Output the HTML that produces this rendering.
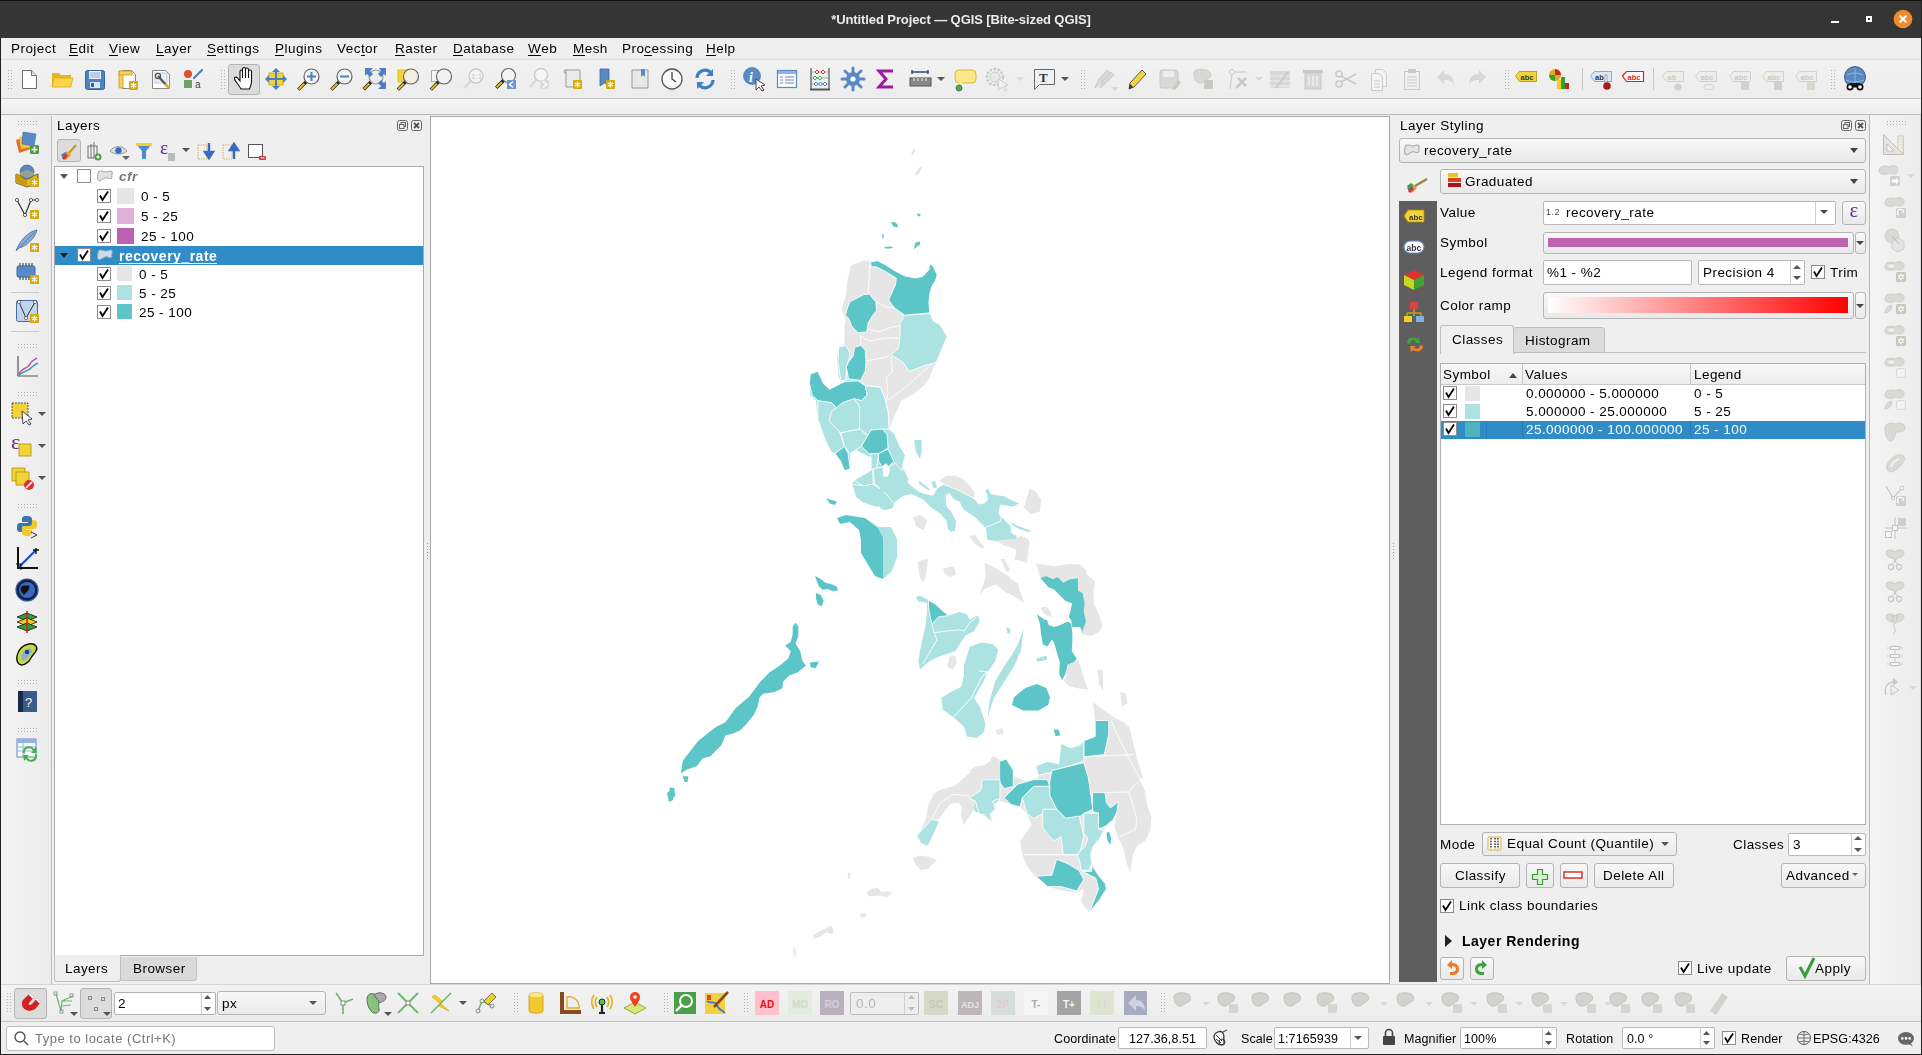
<!DOCTYPE html><html><head><meta charset="utf-8"><style>
*{box-sizing:border-box;margin:0;padding:0}
html,body{width:1922px;height:1055px;overflow:hidden;background:#efefef;font-family:"Liberation Sans",sans-serif;font-size:13px;color:#000}
.a{position:absolute}
.t{position:absolute;white-space:nowrap;line-height:16px;font-size:13.5px;letter-spacing:0.45px;margin-top:1px;will-change:transform}
svg{position:absolute;overflow:visible}
u{text-decoration:none;border-bottom:1px solid #000;line-height:13px;display:inline-block}
</style></head><body><div class="a" style="left:0px;top:0px;width:1922px;height:38px;background:#353535"></div>
<div class="t" style="left:0px;top:11px;width:1922px;text-align:center;color:#ececec;font-weight:bold;font-size:13px;letter-spacing:-0.1px;line-height:16px">*Untitled Project — QGIS [Bite-sized QGIS]</div>
<svg style="left:0px;top:0px" width="1922" height="38" viewBox="0 0 1922 38"><rect x="1831" y="21" width="8" height="2" fill="#fff"/><rect x="1866" y="16" width="6" height="6" fill="#fff"/><rect x="1868" y="18" width="2" height="2" fill="#333"/><circle cx="1903" cy="19" r="9.3" fill="#f08a2c"/><path d="M1899.5 15.5 L1906.5 22.5 M1906.5 15.5 L1899.5 22.5" stroke="#fff" stroke-width="2"/></svg>
<div class="a" style="left:0px;top:38px;width:1px;height:1017px;background:#222"></div>
<div class="a" style="left:1px;top:38px;width:1921px;height:21px;background:#efefef"></div>
<div class="t" style="left:11px;top:40px;">Project</div>
<div class="t" style="left:69px;top:40px;"><u>E</u>dit</div>
<div class="t" style="left:109px;top:40px;"><u>V</u>iew</div>
<div class="t" style="left:156px;top:40px;"><u>L</u>ayer</div>
<div class="t" style="left:207px;top:40px;"><u>S</u>ettings</div>
<div class="t" style="left:275px;top:40px;"><u>P</u>lugins</div>
<div class="t" style="left:337px;top:40px;">Vec<u>t</u>or</div>
<div class="t" style="left:395px;top:40px;"><u>R</u>aster</div>
<div class="t" style="left:453px;top:40px;"><u>D</u>atabase</div>
<div class="t" style="left:528px;top:40px;"><u>W</u>eb</div>
<div class="t" style="left:573px;top:40px;"><u>M</u>esh</div>
<div class="t" style="left:622px;top:40px;">Pro<u>c</u>essing</div>
<div class="t" style="left:706px;top:40px;"><u>H</u>elp</div>
<div class="a" style="left:1px;top:59px;width:1921px;height:40px;background:linear-gradient(#f2f2f2,#ececec);border-top:1px solid #dedede;border-bottom:1px solid #c4c4c4"></div>
<div class="a" style="left:1px;top:99px;width:1921px;height:16px;background:linear-gradient(#f4f4f4,#efefef);border-bottom:1px solid #b9b9b9"></div>
<svg style="left:0px;top:59px" width="1922" height="40" viewBox="0 59 1922 40"><rect x="8" y="70" width="1" height="1" fill="#b0b0b0"/><rect x="11" y="70" width="1" height="1" fill="#b0b0b0"/><rect x="8" y="73" width="1" height="1" fill="#b0b0b0"/><rect x="11" y="73" width="1" height="1" fill="#b0b0b0"/><rect x="8" y="76" width="1" height="1" fill="#b0b0b0"/><rect x="11" y="76" width="1" height="1" fill="#b0b0b0"/><rect x="8" y="79" width="1" height="1" fill="#b0b0b0"/><rect x="11" y="79" width="1" height="1" fill="#b0b0b0"/><rect x="8" y="82" width="1" height="1" fill="#b0b0b0"/><rect x="11" y="82" width="1" height="1" fill="#b0b0b0"/><rect x="8" y="85" width="1" height="1" fill="#b0b0b0"/><rect x="11" y="85" width="1" height="1" fill="#b0b0b0"/><rect x="8" y="88" width="1" height="1" fill="#b0b0b0"/><rect x="11" y="88" width="1" height="1" fill="#b0b0b0"/><g transform="translate(17,67)"><path d="M5.5 3.5 h9 l5 5 v13 h-14 Z" fill="#fff" stroke="#6f6f6f"/><path d="M14.5 3.5 v5 h5" fill="#e6e6e6" stroke="#6f6f6f"/></g><g transform="translate(50,67)"><path d="M2 6 h7 l2 2 h10 v12 h-19 Z" fill="#e8b820"/><path d="M4 11 h19 l-2.5 9 h-18.5 Z" fill="#fdd44a" stroke="#d8a818" stroke-width="0.8"/></g><g transform="translate(83,67)"><rect x="2.5" y="3.5" width="19" height="19" rx="2" fill="#4f82c0" stroke="#33649f"/><rect x="6" y="4" width="12" height="8" fill="#e8eef8"/><path d="M7 6h10M7 8h10M7 10h10" stroke="#7a9ac8" stroke-width="0.8"/><rect x="7" y="15" width="10" height="6" fill="#dfe8f4"/><rect x="8" y="16" width="3" height="4" fill="#33649f"/></g><g transform="translate(116,67)"><path d="M6.5 3.5 h9 l4 4 v14 h-13 Z" fill="#fff" stroke="#888"/><path d="M3 4 h4 v17 h-4 Z" fill="#f2d060" stroke="#c89a10" stroke-width="0.8"/><path d="M3 4 h13 v4 h-13 Z" fill="#f2d060" stroke="#c89a10" stroke-width="0.8"/><g transform="translate(13,14)"><rect x="0" y="0" width="9" height="9" rx="1" fill="#d4a910"/><path d="M4.5 1.5v6M1.8 3l5.4 3M1.8 6l5.4-3" stroke="#fff" stroke-width="1.2"/></g></g><g transform="translate(149,67)"><path d="M3.5 3.5 h13 l4 4 v14 h-17 Z" fill="#fff" stroke="#888"/><rect x="6" y="6" width="12" height="10" fill="#e6eefa" stroke="#98b0d0" stroke-width="0.6"/><path d="M9 9 L18 19" stroke="#555" stroke-width="2.2"/><path d="M16 17 L20 21" stroke="#d8b020" stroke-width="2.4"/><circle cx="9" cy="9" r="2.6" fill="none" stroke="#555" stroke-width="1.2"/></g><g transform="translate(182,67)"><circle cx="6" cy="7" r="4" fill="#d9542b"/><path d="M12 11 L20 3" stroke="#4a7fc0" stroke-width="2.2" stroke-linecap="round"/><rect x="2" y="13" width="8" height="8" fill="#6aa36a"/><text x="13" y="21" font-size="10" font-family="Liberation Sans" fill="#444">a</text></g><rect x="221" y="70" width="1" height="1" fill="#b0b0b0"/><rect x="224" y="70" width="1" height="1" fill="#b0b0b0"/><rect x="221" y="73" width="1" height="1" fill="#b0b0b0"/><rect x="224" y="73" width="1" height="1" fill="#b0b0b0"/><rect x="221" y="76" width="1" height="1" fill="#b0b0b0"/><rect x="224" y="76" width="1" height="1" fill="#b0b0b0"/><rect x="221" y="79" width="1" height="1" fill="#b0b0b0"/><rect x="224" y="79" width="1" height="1" fill="#b0b0b0"/><rect x="221" y="82" width="1" height="1" fill="#b0b0b0"/><rect x="224" y="82" width="1" height="1" fill="#b0b0b0"/><rect x="221" y="85" width="1" height="1" fill="#b0b0b0"/><rect x="224" y="85" width="1" height="1" fill="#b0b0b0"/><rect x="221" y="88" width="1" height="1" fill="#b0b0b0"/><rect x="224" y="88" width="1" height="1" fill="#b0b0b0"/><rect x="228.5" y="64.5" width="31" height="30" rx="2.5" fill="#dcdcdc" stroke="#b4b4b4"/><g transform="translate(233,66)"><path d="M8 23 C6 19 2 15 1.5 13 C1 11 3 10.5 4.5 12 L7 15 V5.5 C7 3.5 9.5 3.5 9.5 5.5 V12 V3 C9.5 1 12.5 1 12.5 3 V12 V3.5 C12.5 1.5 15.5 1.5 15.5 3.5 V12 V5.5 C15.5 3.5 18.5 3.5 18.5 5.5 V16 C18.5 19 17 21 16.5 23 Z" fill="#fff" stroke="#111" stroke-width="1.1"/></g><g transform="translate(264,67)"><rect x="5" y="6" width="14" height="12" fill="#f2d43a" stroke="#c9a400" stroke-width="0.8"/><path d="M12 1 L16 5 H8 Z M12 23 L8 19 H16 Z M1 12 L5 8 V16 Z M23 12 L19 16 V8 Z" fill="#4a7fc0"/><path d="M12 4V20M4 12H20" stroke="#4a7fc0" stroke-width="2"/></g><g transform="translate(297,67)"><path d="M9.100000000000001 14.899999999999999 L1.375 22.625" stroke="#222" stroke-width="3.4" stroke-linecap="butt"/><path d="M7.375 16.625 L1.75 22.25" stroke="#e8c020" stroke-width="2" stroke-linecap="butt"/><circle cx="14.5" cy="9.5" r="7.5" fill="#f6f6f6" stroke="#666" stroke-width="1.2"/><path d="M14.5 5v9M10 9.5h9" stroke="#4a7fc0" stroke-width="2"/></g><g transform="translate(330,67)"><path d="M9.100000000000001 14.899999999999999 L1.375 22.625" stroke="#222" stroke-width="3.4" stroke-linecap="butt"/><path d="M7.375 16.625 L1.75 22.25" stroke="#e8c020" stroke-width="2" stroke-linecap="butt"/><circle cx="14.5" cy="9.5" r="7.5" fill="#f6f6f6" stroke="#666" stroke-width="1.2"/><path d="M10 9.5h9" stroke="#4a7fc0" stroke-width="2"/></g><g transform="translate(363,67)"><path d="M7.96 15.04 L0.75 22.25" stroke="#222" stroke-width="3.4" stroke-linecap="butt"/><path d="M6.3500000000000005 16.65 L1.0999999999999996 21.9" stroke="#e8c020" stroke-width="2" stroke-linecap="butt"/><circle cx="13" cy="10" r="7" fill="#ececec" stroke="#999" stroke-width="1.2"/><path d="M2 1 h8 l-3 3 3 3 -3 3 -3 -3 -2 2 Z M23 1 v8 l-2 -2 -3 3 -3 -3 3 -3 -2 -3 Z M23 22 h-8 l3 -3 -3 -3 3 -3 3 3 2 -2 Z" fill="#4a7fc0"/></g><g transform="translate(396,67)"><rect x="2" y="3" width="11" height="12" fill="#f2d43a" stroke="#c9a400" stroke-width="0.6"/><path d="M9.600000000000001 14.899999999999999 L1.875 22.625" stroke="#222" stroke-width="3.4" stroke-linecap="butt"/><path d="M7.875 16.625 L2.25 22.25" stroke="#e8c020" stroke-width="2" stroke-linecap="butt"/><circle cx="15" cy="9.5" r="7.5" fill="#f0eee0" stroke="#666" stroke-width="1.2"/></g><g transform="translate(429,67)"><rect x="2.5" y="3.5" width="10" height="11" fill="#f4f4f4" stroke="#aaa"/><path d="M9.600000000000001 14.899999999999999 L1.875 22.625" stroke="#222" stroke-width="3.4" stroke-linecap="butt"/><path d="M7.875 16.625 L2.25 22.25" stroke="#e8c020" stroke-width="2" stroke-linecap="butt"/><circle cx="15" cy="9.5" r="7.5" fill="#f2f2f2" stroke="#666" stroke-width="1.2"/></g><g transform="translate(462,67)"><path d="M9 14 L2 21" stroke="#d8d8d4" stroke-width="2.4"/><circle cx="14" cy="9" r="7" fill="#f3f3f3" stroke="#c9c9c6" stroke-width="1.3"/><text x="9" y="12" font-size="8" fill="#c9c9c6" font-family="Liberation Sans">1:1</text></g><g transform="translate(495,67)"><path d="M8.46 13.54 L1.25 20.75" stroke="#222" stroke-width="3.4" stroke-linecap="butt"/><path d="M6.8500000000000005 15.149999999999999 L1.5999999999999996 20.4" stroke="#e8c020" stroke-width="2" stroke-linecap="butt"/><circle cx="13.5" cy="8.5" r="7" fill="#f4f4f4" stroke="#666" stroke-width="1.2"/><rect x="12" y="13" width="9" height="9" fill="#6b98d0"/><path d="M18 14.5 L14.5 17.5 L18 20.5" stroke="#fff" stroke-width="1.4" fill="none"/></g><g transform="translate(528,67)"><path d="M8 13 L2 20" stroke="#d8d8d4" stroke-width="2.4"/><circle cx="13" cy="8" r="6.5" fill="#f5f5f5" stroke="#c9c9c6" stroke-width="1.3"/><rect x="12" y="13" width="9" height="9" fill="#dcdcdc"/><path d="M15 14.5 L18.5 17.5 L15 20.5" stroke="#fff" stroke-width="1.4" fill="none"/></g><g transform="translate(562,67)"><path d="M4 3 h14 v17 h-14 Z" fill="#eaeae6" stroke="#999"/><path d="M4 3 C1 3 1 6 4 6" fill="none" stroke="#999"/><g transform="translate(11,13)"><rect x="0" y="0" width="9" height="9" rx="1" fill="#d4a910"/><path d="M4.5 1.5v6M1.8 3l5.4 3M1.8 6l5.4-3" stroke="#fff" stroke-width="1.2"/></g></g><g transform="translate(595,67)"><path d="M5 2 h9 v17 l-4.5 -3 -4.5 3 Z" fill="#5a8ac6" stroke="#3a6aa6" stroke-width="0.8"/><g transform="translate(11,13)"><rect x="0" y="0" width="9" height="9" rx="1" fill="#d4a910"/><path d="M4.5 1.5v6M1.8 3l5.4 3M1.8 6l5.4-3" stroke="#fff" stroke-width="1.2"/></g></g><g transform="translate(628,67)"><path d="M4 3 h16 v18 h-16 Z" fill="#e8e8e4" stroke="#999"/><path d="M13 2 h4 v8 l-2 -2 -2 2 Z" fill="#5a8ac6"/></g><g transform="translate(660,67)"><circle cx="12" cy="12" r="10" fill="#fafafa" stroke="#555" stroke-width="1.3"/><path d="M12 5 V12 L16 15" stroke="#444" stroke-width="1.3" fill="none"/></g><g transform="translate(693,67)"><path d="M4 11 A8 8 0 0 1 18 6" stroke="#3d7ec8" stroke-width="3.2" fill="none"/><path d="M20 2 V9 H13 Z" fill="#3d7ec8"/><path d="M20 13 A8 8 0 0 1 6 18" stroke="#3d7ec8" stroke-width="3.2" fill="none"/><path d="M4 22 V15 H11 Z" fill="#3d7ec8"/></g><rect x="731" y="70" width="1" height="1" fill="#b0b0b0"/><rect x="734" y="70" width="1" height="1" fill="#b0b0b0"/><rect x="731" y="73" width="1" height="1" fill="#b0b0b0"/><rect x="734" y="73" width="1" height="1" fill="#b0b0b0"/><rect x="731" y="76" width="1" height="1" fill="#b0b0b0"/><rect x="734" y="76" width="1" height="1" fill="#b0b0b0"/><rect x="731" y="79" width="1" height="1" fill="#b0b0b0"/><rect x="734" y="79" width="1" height="1" fill="#b0b0b0"/><rect x="731" y="82" width="1" height="1" fill="#b0b0b0"/><rect x="734" y="82" width="1" height="1" fill="#b0b0b0"/><rect x="731" y="85" width="1" height="1" fill="#b0b0b0"/><rect x="734" y="85" width="1" height="1" fill="#b0b0b0"/><rect x="731" y="88" width="1" height="1" fill="#b0b0b0"/><rect x="734" y="88" width="1" height="1" fill="#b0b0b0"/><g transform="translate(742,67)"><circle cx="10" cy="9" r="8.5" fill="#5a8ac6" stroke="#3a6aa6" stroke-width="0.6"/><text x="7" y="15" font-size="14" font-style="italic" font-weight="bold" fill="#fff" font-family="Liberation Serif">i</text><path d="M14 12 L14 23 L17 20 L20 24 L22 23 L19 19 L23 18 Z" fill="#fff" stroke="#333" stroke-width="0.9"/></g><g transform="translate(775,67)"><rect x="2.5" y="3.5" width="19" height="17" fill="#fff" stroke="#5a8ac6" stroke-width="1.2"/><rect x="3" y="4" width="18" height="3" fill="#8fb2de"/><path d="M5 10h3M10 10h9M5 13h3M10 13h9M5 16h3M10 16h9" stroke="#5a8ac6" stroke-width="1.2"/></g><g transform="translate(808,67)"><path d="M3 1 V22 M21 1 V22" stroke="#555" stroke-width="1.2"/><path d="M2 22.5 H22" stroke="#555" stroke-width="2"/><path d="M3 5h18M3 11h18M3 17h18" stroke="#888" stroke-width="0.7"/><path d="M9 3l2 2-2 2-2-2z M15 3l2 2-2 2-2-2z" fill="#fff" stroke="#e03030" stroke-width="1"/><path d="M7 9l2 2-2 2-2-2z M12 9l2 2-2 2-2-2z" fill="#fff" stroke="#40b040" stroke-width="1"/><path d="M8 15l2 2-2 2-2-2z M12.5 15l2 2-2 2-2-2z M17 15l2 2-2 2-2-2z" fill="#fff" stroke="#4080d0" stroke-width="1"/></g><g transform="translate(841,67)"><path d="M12 1v22M1 12h22M4 4l16 16M20 4L4 20" stroke="#5a8ac6" stroke-width="3" stroke-linecap="round"/><circle cx="12" cy="12" r="7" fill="#5a8ac6"/><circle cx="12" cy="12" r="2.6" fill="#fff"/></g><g transform="translate(874,67)"><path d="M19 4 H5 L12 12 L5 20 H19" fill="none" stroke="#9a1aa0" stroke-width="3"/></g><g transform="translate(908,67)"><path d="M4 5 H20 M4 3 V7 M20 3 V7" stroke="#2a4a7a" stroke-width="1.5"/><rect x="2" y="11" width="21" height="8" fill="#888" stroke="#555"/><path d="M6 11v3M10 11v3M14 11v3M18 11v3" stroke="#eee" stroke-width="1"/></g><path d="M937 77 L945 77 L941 81 Z" fill="#555"/><g transform="translate(953,67)"><rect x="2" y="3" width="21" height="13" rx="4" fill="#fbe88a" stroke="#d8b830" stroke-width="1"/><path d="M6 15 L5 20 L10 15" fill="#fbe88a"/><circle cx="6" cy="21" r="3" fill="#5aa05a" stroke="#3a703a" stroke-width="0.8"/></g><g transform="translate(985,67)"><circle cx="10" cy="10" r="8" fill="none" stroke="#c9c9c6" stroke-width="2.4" stroke-dasharray="2.5 1.5"/><circle cx="10" cy="10" r="5" fill="#e9e9e9" stroke="#c9c9c6"/><path d="M13 12 L14 23 L17 20 L20 24 L22 23 L19 19 L23 18 Z" fill="#f2f2f2" stroke="#c9c9c6" stroke-width="0.9"/></g><path d="M1016 77 L1024 77 L1020 81 Z" fill="#d8d8d4"/><g transform="translate(1032,67)"><path d="M2.5 2.5 h20 v15 h-15 l-5 5 v-5 Z" fill="#eef2f6" stroke="#666" stroke-width="1"/><text x="7" y="15" font-size="13" font-weight="bold" fill="#333" font-family="Liberation Serif">T</text></g><path d="M1061 77 L1069 77 L1065 81 Z" fill="#555"/><rect x="1081" y="70" width="1" height="1" fill="#b0b0b0"/><rect x="1084" y="70" width="1" height="1" fill="#b0b0b0"/><rect x="1081" y="73" width="1" height="1" fill="#b0b0b0"/><rect x="1084" y="73" width="1" height="1" fill="#b0b0b0"/><rect x="1081" y="76" width="1" height="1" fill="#b0b0b0"/><rect x="1084" y="76" width="1" height="1" fill="#b0b0b0"/><rect x="1081" y="79" width="1" height="1" fill="#b0b0b0"/><rect x="1084" y="79" width="1" height="1" fill="#b0b0b0"/><rect x="1081" y="82" width="1" height="1" fill="#b0b0b0"/><rect x="1084" y="82" width="1" height="1" fill="#b0b0b0"/><rect x="1081" y="85" width="1" height="1" fill="#b0b0b0"/><rect x="1084" y="85" width="1" height="1" fill="#b0b0b0"/><rect x="1081" y="88" width="1" height="1" fill="#b0b0b0"/><rect x="1084" y="88" width="1" height="1" fill="#b0b0b0"/><g transform="translate(1092,67)"><path d="M3 21 L6 13 L15 3 L19 6 L9 16 Z" fill="#d8d8d4" stroke="#c9c9c6" stroke-width="0.8"/><path d="M8 21 L11 14 L19 5 L22 8 L13 17 Z" fill="#d8d8d4" stroke="#c9c9c6" stroke-width="0.8"/></g><path d="M1111 87 L1119 87 L1115 91 Z" fill="#d8d8d4"/><g transform="translate(1125,67)"><path d="M4 22 L5 16 L17 3 L21 7 L9 20 Z" fill="#f2d63c" stroke="#555" stroke-width="1"/><path d="M4 22 L5 17 L8 20 Z" fill="#333"/></g><g transform="translate(1158,67)"><rect x="2" y="3" width="18" height="18" rx="2" fill="#d8d8d4" stroke="#c9c9c6"/><rect x="5" y="4" width="11" height="6" fill="#eee"/><path d="M14 22 L20 13 L23 15 L17 23 Z" fill="#c9c9c6"/></g><g transform="translate(1191,67)"><path d="M3 6 C3 1 14 2 17 4 C21 6 20 11 17 12 C14 13 12 17 8 16 C4 15 3 10 3 6 Z" fill="#d8d8d4" stroke="#c9c9c6"/><g transform="translate(13,13)"><rect x="0" y="0" width="9" height="9" rx="1" fill="#c9c9c6"/></g></g><g transform="translate(1226,67)"><circle cx="6" cy="5" r="2.5" fill="none" stroke="#c9c9c6"/><path d="M6 8 L4 22 M9 5 H20" stroke="#c9c9c6"/><path d="M10 21 L20 11 M12 11 L20 19" stroke="#c9c9c6" stroke-width="2.5"/></g><path d="M1255 77 L1263 77 L1259 81 Z" fill="#d8d8d4"/><g transform="translate(1268,67)"><rect x="2" y="4" width="20" height="17" fill="#d8d8d4"/><path d="M2 9h20M2 14h20M2 19h20" stroke="#eee"/><path d="M8 21 L20 5" stroke="#c9c9c6" stroke-width="2"/></g><g transform="translate(1301,67)"><rect x="4" y="6" width="16" height="16" fill="#d8d8d4" stroke="#c9c9c6"/><rect x="2" y="3" width="20" height="3" fill="#c9c9c6"/><path d="M8 9v10M12 9v10M16 9v10" stroke="#eee" stroke-width="1.5"/></g><g transform="translate(1334,67)"><circle cx="5" cy="7" r="3" fill="none" stroke="#c9c9c6" stroke-width="1.5"/><circle cx="5" cy="17" r="3" fill="none" stroke="#c9c9c6" stroke-width="1.5"/><path d="M7 9 L22 17 M7 15 L22 7" stroke="#c9c9c6" stroke-width="1.6"/></g><g transform="translate(1367,67)"><path d="M8.5 2.5 h7 l4 4 v13 h-11 Z" fill="#f4f4f4" stroke="#c9c9c6"/><path d="M4.5 6.5 h7 l4 4 v13 h-11 Z" fill="#f4f4f4" stroke="#c9c9c6"/><path d="M7 14h6M7 17h6M7 20h6" stroke="#c9c9c6"/></g><g transform="translate(1400,67)"><rect x="4.5" y="4.5" width="15" height="18" fill="#f0f0f0" stroke="#c9c9c6"/><rect x="8" y="2" width="8" height="4" fill="#c9c9c6"/><path d="M7 10h10M7 13h10M7 16h10M7 19h10" stroke="#c9c9c6"/></g><g transform="translate(1433,67)"><path d="M4 10 L11 3 V7 C18 7 21 11 21 18 C19 14 16 13 11 13 V17 Z" fill="#d8d8d4"/></g><g transform="translate(1466,67)"><path d="M20 10 L13 3 V7 C6 7 3 11 3 18 C5 14 8 13 13 13 V17 Z" fill="#d8d8d4"/></g><rect x="1505" y="70" width="1" height="1" fill="#b0b0b0"/><rect x="1508" y="70" width="1" height="1" fill="#b0b0b0"/><rect x="1505" y="73" width="1" height="1" fill="#b0b0b0"/><rect x="1508" y="73" width="1" height="1" fill="#b0b0b0"/><rect x="1505" y="76" width="1" height="1" fill="#b0b0b0"/><rect x="1508" y="76" width="1" height="1" fill="#b0b0b0"/><rect x="1505" y="79" width="1" height="1" fill="#b0b0b0"/><rect x="1508" y="79" width="1" height="1" fill="#b0b0b0"/><rect x="1505" y="82" width="1" height="1" fill="#b0b0b0"/><rect x="1508" y="82" width="1" height="1" fill="#b0b0b0"/><rect x="1505" y="85" width="1" height="1" fill="#b0b0b0"/><rect x="1508" y="85" width="1" height="1" fill="#b0b0b0"/><rect x="1505" y="88" width="1" height="1" fill="#b0b0b0"/><rect x="1508" y="88" width="1" height="1" fill="#b0b0b0"/><g transform="translate(1514,67)"><path d="M1.5 9 L5.5 4.5 H22.5 V14.5 H5.5 Z" fill="#f3d33a" stroke="#b09000" stroke-width="0.8"/><text x="6.5" y="12.5" font-size="7.5" font-weight="bold" fill="#333" font-family="Liberation Sans">abc</text></g><g transform="translate(1547,67)"><circle cx="8" cy="8" r="6" fill="#d8b020"/><path d="M8 2 A6 6 0 0 1 14 8 L8 8 Z" fill="#cc2222"/><path d="M2 8 A6 6 0 0 0 8 14 V8 Z" fill="#30a030"/><rect x="10" y="13" width="4" height="9" fill="#f2d020"/><rect x="14" y="10" width="4" height="12" fill="#30a030"/><rect x="18" y="16" width="4" height="6" fill="#cc2222"/></g><rect x="1582" y="68" width="1" height="22" fill="#c8c8c8"/><g transform="translate(1589,67)"><path d="M1.5 9 L5.5 4.5 H22.5 V14.5 H5.5 Z" fill="#dce8f8" stroke="#6a98d8" stroke-width="0.8"/><text x="6" y="12.5" font-size="7.5" font-weight="bold" fill="#333" font-family="Liberation Sans">ab</text><rect x="16" y="8" width="2" height="9" fill="#fff" stroke="#555" stroke-width="0.5"/><circle cx="18" cy="19" r="3.8" fill="#a02020"/></g><g transform="translate(1621,67)"><path d="M1.5 9 L5.5 4.5 H22.5 V14.5 H5.5 Z" fill="#fff" stroke="#e02020" stroke-width="1.2"/><text x="6.5" y="12.5" font-size="7.5" font-weight="bold" fill="#e02020" font-family="Liberation Sans">abc</text></g><rect x="1653" y="68" width="1" height="22" fill="#c8c8c8"/><g transform="translate(1661,67)"><path d="M1.5 9 L5.5 4.5 H22.5 V14.5 H5.5 Z" fill="#eeeeea" stroke="#c9c9c6" stroke-width="0.8"/><text x="6.5" y="12.5" font-size="7.5" font-weight="bold" fill="#c9c9c6" font-family="Liberation Sans">ab</text><circle cx="17" cy="20" r="3.5" fill="#d0d0d0"/></g><g transform="translate(1694,67)"><path d="M1.5 9 L5.5 4.5 H22.5 V14.5 H5.5 Z" fill="#eeeeea" stroke="#c9c9c6" stroke-width="0.8"/><text x="6.5" y="12.5" font-size="7.5" font-weight="bold" fill="#c9c9c6" font-family="Liberation Sans">abc</text><ellipse cx="15" cy="20" rx="5" ry="2.5" fill="none" stroke="#d0d0d0"/></g><g transform="translate(1728,67)"><path d="M1.5 9 L5.5 4.5 H22.5 V14.5 H5.5 Z" fill="#eeeeea" stroke="#c9c9c6" stroke-width="0.8"/><text x="6.5" y="12.5" font-size="7.5" font-weight="bold" fill="#c9c9c6" font-family="Liberation Sans">abc</text><rect x="13" y="15" width="8" height="8" fill="#d0d0d0"/></g><g transform="translate(1761,67)"><path d="M1.5 9 L5.5 4.5 H22.5 V14.5 H5.5 Z" fill="#eeeeea" stroke="#c9c9c6" stroke-width="0.8"/><text x="6.5" y="12.5" font-size="7.5" font-weight="bold" fill="#c9c9c6" font-family="Liberation Sans">abc</text><rect x="13" y="15" width="8" height="8" fill="#d0d0d0"/></g><g transform="translate(1794,67)"><path d="M1.5 9 L5.5 4.5 H22.5 V14.5 H5.5 Z" fill="#eeeeea" stroke="#c9c9c6" stroke-width="0.8"/><text x="6.5" y="12.5" font-size="7.5" font-weight="bold" fill="#c9c9c6" font-family="Liberation Sans">abc</text><rect x="13" y="15" width="8" height="8" fill="#d8d8d0"/></g><rect x="1831" y="70" width="1" height="1" fill="#b0b0b0"/><rect x="1834" y="70" width="1" height="1" fill="#b0b0b0"/><rect x="1831" y="73" width="1" height="1" fill="#b0b0b0"/><rect x="1834" y="73" width="1" height="1" fill="#b0b0b0"/><rect x="1831" y="76" width="1" height="1" fill="#b0b0b0"/><rect x="1834" y="76" width="1" height="1" fill="#b0b0b0"/><rect x="1831" y="79" width="1" height="1" fill="#b0b0b0"/><rect x="1834" y="79" width="1" height="1" fill="#b0b0b0"/><rect x="1831" y="82" width="1" height="1" fill="#b0b0b0"/><rect x="1834" y="82" width="1" height="1" fill="#b0b0b0"/><rect x="1831" y="85" width="1" height="1" fill="#b0b0b0"/><rect x="1834" y="85" width="1" height="1" fill="#b0b0b0"/><rect x="1831" y="88" width="1" height="1" fill="#b0b0b0"/><rect x="1834" y="88" width="1" height="1" fill="#b0b0b0"/><g transform="translate(1843,67)"><circle cx="12" cy="10" r="10.5" fill="#5a88c0" stroke="#2a4a7a" stroke-width="0.8"/><path d="M4 8 Q12 4 20 8 M3 13 Q12 17 21 13 M12 1 V21" stroke="#9ec0e8" stroke-width="0.8" fill="none"/><circle cx="7" cy="20" r="3.5" fill="#111"/><circle cx="17" cy="20" r="3.5" fill="#111"/><rect x="7" y="16" width="10" height="4" fill="#111"/><circle cx="7" cy="20" r="1.8" fill="#fff"/><circle cx="17" cy="20" r="1.8" fill="#fff"/></g></svg>
<div class="a" style="left:1px;top:116px;width:51px;height:869px;background:linear-gradient(90deg,#f4f4f4,#ebebeb);border-right:1px solid #bdbdbd"></div>
<svg style="left:0px;top:115px" width="52" height="870" viewBox="0 115 52 870"><rect x="18" y="121" width="1" height="1" fill="#b0b0b0"/><rect x="18" y="124" width="1" height="1" fill="#b0b0b0"/><rect x="21" y="121" width="1" height="1" fill="#b0b0b0"/><rect x="21" y="124" width="1" height="1" fill="#b0b0b0"/><rect x="24" y="121" width="1" height="1" fill="#b0b0b0"/><rect x="24" y="124" width="1" height="1" fill="#b0b0b0"/><rect x="27" y="121" width="1" height="1" fill="#b0b0b0"/><rect x="27" y="124" width="1" height="1" fill="#b0b0b0"/><rect x="30" y="121" width="1" height="1" fill="#b0b0b0"/><rect x="30" y="124" width="1" height="1" fill="#b0b0b0"/><rect x="33" y="121" width="1" height="1" fill="#b0b0b0"/><rect x="33" y="124" width="1" height="1" fill="#b0b0b0"/><rect x="36" y="121" width="1" height="1" fill="#b0b0b0"/><rect x="36" y="124" width="1" height="1" fill="#b0b0b0"/><g transform="translate(15,131)"><path d="M1 9 L13 5 L16 18 L4 22 Z" fill="#e07030"/><path d="M4 6 L15 4 L17 16 L6 18 Z" fill="#f2c830"/><path d="M8 1 L21 3 L19 15 L7 13 Z" fill="#5a8ac6" stroke="#3a6aa6" stroke-width="0.6"/><rect x="15" y="14" width="9" height="9" rx="1.5" fill="#4a9a4a"/><path d="M19.5 15.5v6M16.5 18.5h6" stroke="#fff" stroke-width="1.6"/></g><g transform="translate(15,163)"><path d="M1 11 L12 15 L23 11 V20 L12 24 L1 20 Z" fill="#e0b820" stroke="#333" stroke-width="0.8"/><path d="M1 11 L12 15 L12 24 L1 20 Z" fill="#c89a10"/><circle cx="12" cy="9" r="7" fill="#5a88c0" stroke="#2a4a7a" stroke-width="0.6"/><path d="M1 11 L12 7 L23 11 L12 15 Z" fill="#f2d040" opacity="0.4"/><g transform="translate(15,15)"><rect x="0" y="0" width="9" height="9" rx="1" fill="#d4a910"/><path d="M4.5 1.5v6M1.8 3l5.4 3M1.8 6l5.4-3" stroke="#fff" stroke-width="1.2"/></g></g><g transform="translate(15,195)"><path d="M2 5 L10 20 L16 5 L22 5" fill="none" stroke="#333" stroke-width="1.2"/><circle cx="2" cy="5" r="1.6" fill="#fff" stroke="#333" stroke-width="0.8"/><circle cx="10" cy="20" r="1.6" fill="#fff" stroke="#333" stroke-width="0.8"/><circle cx="16" cy="5" r="1.6" fill="#fff" stroke="#333" stroke-width="0.8"/><circle cx="22" cy="5" r="1.6" fill="#fff" stroke="#333" stroke-width="0.8"/><g transform="translate(15,15)"><rect x="0" y="0" width="9" height="9" rx="1" fill="#d4a910"/><path d="M4.5 1.5v6M1.8 3l5.4 3M1.8 6l5.4-3" stroke="#fff" stroke-width="1.2"/></g></g><g transform="translate(15,228)"><path d="M1 23 C4 14 12 4 22 2 C20 10 12 18 4 20 Z" fill="#8aaad0" stroke="#4a6a9a" stroke-width="0.8"/><path d="M2 22 L20 4" stroke="#4a6a9a" stroke-width="0.7"/><g transform="translate(15,15)"><rect x="0" y="0" width="9" height="9" rx="1" fill="#d4a910"/><path d="M4.5 1.5v6M1.8 3l5.4 3M1.8 6l5.4-3" stroke="#fff" stroke-width="1.2"/></g></g><g transform="translate(15,260)"><rect x="2" y="6" width="18" height="11" rx="1.5" fill="#5a8ac6" stroke="#3a6aa6"/><path d="M5 3v3M8 3v3M11 3v3M14 3v3M17 3v3M5 17v3M8 17v3M11 17v3M14 17v3" stroke="#333" stroke-width="1"/><g transform="translate(15,15)"><rect x="0" y="0" width="9" height="9" rx="1" fill="#d4a910"/><path d="M4.5 1.5v6M1.8 3l5.4 3M1.8 6l5.4-3" stroke="#fff" stroke-width="1.2"/></g></g><rect x="11" y="292" width="28" height="1" fill="#c8c8c8"/><g transform="translate(15,299)"><rect x="1.5" y="1.5" width="21" height="21" rx="2" fill="#c0d4ec" stroke="#4a6a9a" stroke-width="1"/><path d="M4 3 L11 19 L20 3" fill="none" stroke="#333" stroke-width="1"/><circle cx="4" cy="3" r="1.6" fill="#fff" stroke="#333" stroke-width="0.6"/><circle cx="11" cy="19" r="1.6" fill="#fff" stroke="#333" stroke-width="0.6"/><circle cx="20" cy="3" r="1.6" fill="#fff" stroke="#333" stroke-width="0.6"/><g transform="translate(15,15)"><rect x="0" y="0" width="9" height="9" rx="1" fill="#d4a910"/><path d="M4.5 1.5v6M1.8 3l5.4 3M1.8 6l5.4-3" stroke="#fff" stroke-width="1.2"/></g></g><rect x="11" y="331" width="28" height="1" fill="#c8c8c8"/><rect x="18" y="344" width="1" height="1" fill="#b0b0b0"/><rect x="18" y="347" width="1" height="1" fill="#b0b0b0"/><rect x="21" y="344" width="1" height="1" fill="#b0b0b0"/><rect x="21" y="347" width="1" height="1" fill="#b0b0b0"/><rect x="24" y="344" width="1" height="1" fill="#b0b0b0"/><rect x="24" y="347" width="1" height="1" fill="#b0b0b0"/><rect x="27" y="344" width="1" height="1" fill="#b0b0b0"/><rect x="27" y="347" width="1" height="1" fill="#b0b0b0"/><rect x="30" y="344" width="1" height="1" fill="#b0b0b0"/><rect x="30" y="347" width="1" height="1" fill="#b0b0b0"/><rect x="33" y="344" width="1" height="1" fill="#b0b0b0"/><rect x="33" y="347" width="1" height="1" fill="#b0b0b0"/><rect x="36" y="344" width="1" height="1" fill="#b0b0b0"/><rect x="36" y="347" width="1" height="1" fill="#b0b0b0"/><g transform="translate(15,354)"><path d="M3 2 V22 H23" fill="none" stroke="#555" stroke-width="1.2"/><path d="M4 20 C8 12 12 16 15 10 C17 6 20 6 22 4" fill="none" stroke="#c040c0" stroke-width="1.4"/><path d="M4 21 C9 16 13 18 17 13 C19 11 21 10 23 9" fill="none" stroke="#30a0a0" stroke-width="1.4"/></g><rect x="18" y="392" width="1" height="1" fill="#b0b0b0"/><rect x="18" y="395" width="1" height="1" fill="#b0b0b0"/><rect x="21" y="392" width="1" height="1" fill="#b0b0b0"/><rect x="21" y="395" width="1" height="1" fill="#b0b0b0"/><rect x="24" y="392" width="1" height="1" fill="#b0b0b0"/><rect x="24" y="395" width="1" height="1" fill="#b0b0b0"/><rect x="27" y="392" width="1" height="1" fill="#b0b0b0"/><rect x="27" y="395" width="1" height="1" fill="#b0b0b0"/><rect x="30" y="392" width="1" height="1" fill="#b0b0b0"/><rect x="30" y="395" width="1" height="1" fill="#b0b0b0"/><rect x="33" y="392" width="1" height="1" fill="#b0b0b0"/><rect x="33" y="395" width="1" height="1" fill="#b0b0b0"/><rect x="36" y="392" width="1" height="1" fill="#b0b0b0"/><rect x="36" y="395" width="1" height="1" fill="#b0b0b0"/><g transform="translate(10,401)"><rect x="2" y="2" width="16" height="15" fill="#f2d43a" stroke="#333" stroke-width="0.8" stroke-dasharray="2 1"/><path d="M12 10 L13 23 L16 20 L19 24 L21 23 L18 19 L22 18 Z" fill="#fff" stroke="#333" stroke-width="0.9"/></g><path d="M38 412 L46 412 L42 416 Z" fill="#555"/><g transform="translate(10,434)"><text x="1" y="15" font-size="22" fill="#6a2a8a" font-family="Liberation Serif">ε</text><rect x="9" y="10" width="12" height="12" fill="#f2d43a" stroke="#b09000" stroke-width="0.8"/></g><path d="M38 444 L46 444 L42 448 Z" fill="#555"/><g transform="translate(10,466)"><rect x="2" y="2" width="13" height="13" fill="#f2d43a" stroke="#b09000" stroke-width="0.8"/><rect x="6" y="6" width="13" height="13" fill="#f2d43a" stroke="#b09000" stroke-width="0.8"/><circle cx="19" cy="19" r="5" fill="#e03030"/><path d="M16 22 L22 16" stroke="#fff" stroke-width="1.6"/></g><path d="M38 476 L46 476 L42 480 Z" fill="#555"/><rect x="18" y="504" width="1" height="1" fill="#b0b0b0"/><rect x="18" y="507" width="1" height="1" fill="#b0b0b0"/><rect x="21" y="504" width="1" height="1" fill="#b0b0b0"/><rect x="21" y="507" width="1" height="1" fill="#b0b0b0"/><rect x="24" y="504" width="1" height="1" fill="#b0b0b0"/><rect x="24" y="507" width="1" height="1" fill="#b0b0b0"/><rect x="27" y="504" width="1" height="1" fill="#b0b0b0"/><rect x="27" y="507" width="1" height="1" fill="#b0b0b0"/><rect x="30" y="504" width="1" height="1" fill="#b0b0b0"/><rect x="30" y="507" width="1" height="1" fill="#b0b0b0"/><rect x="33" y="504" width="1" height="1" fill="#b0b0b0"/><rect x="33" y="507" width="1" height="1" fill="#b0b0b0"/><rect x="36" y="504" width="1" height="1" fill="#b0b0b0"/><rect x="36" y="507" width="1" height="1" fill="#b0b0b0"/><g transform="translate(15,514)"><path d="M12 2 C7 2 7 4 7 6 V8 H13 V9 H5 C2 9 2 12 2 14 C2 17 3 18 5 18 H7 V15 C7 13 8 12 10 12 H15 C17 12 17 11 17 9 V5 C17 3 15 2 12 2 Z" fill="#3a74b0"/><path d="M12 22 C17 22 17 20 17 18 V16 H11 V15 H19 C22 15 22 12 22 10 C22 7 21 6 19 6 H17 V9 C17 11 16 12 14 12 H9 C7 12 7 13 7 15 V19 C7 21 9 22 12 22 Z" fill="#f2c830"/><path d="M16 18 L22 21 L16 24" fill="none" stroke="#333" stroke-width="1"/></g><g transform="translate(15,546)"><path d="M3 1 V22 H23" fill="none" stroke="#111" stroke-width="2"/><path d="M4 21 L21 4" stroke="#1a4ad0" stroke-width="2.2"/><path d="M21 2 V8 M18 4 H24" stroke="#111" stroke-width="1.4"/><path d="M1 18 H6 M6 18 V24" stroke="#111" stroke-width="1"/></g><g transform="translate(15,578)"><circle cx="12" cy="12" r="11" fill="#10204a" stroke="#3a5a9a" stroke-width="1.2"/><circle cx="12" cy="12" r="8" fill="#3a6ac0"/><path d="M6 9 C9 6 12 9 14 7 C16 12 11 14 9 17 C7 14 5 13 6 9 Z" fill="#111"/></g><g transform="translate(15,610)"><path d="M2 7 L12 3 L22 7 L12 11 Z" fill="#30a030" stroke="#111" stroke-width="0.8"/><path d="M2 12 L12 8 L22 12 L12 16 Z" fill="#f2d020" stroke="#111" stroke-width="0.8"/><path d="M2 17 L12 13 L22 17 L12 21 Z" fill="#30a030" stroke="#111" stroke-width="0.8"/><path d="M12 1 V23" stroke="#d02020" stroke-width="1.6"/></g><g transform="translate(15,642)"><path d="M4 22 C0 18 2 10 6 6 C10 2 18 0 21 4 C24 8 18 12 16 16 C14 20 8 25 4 22 Z" fill="#c8d840" stroke="#111" stroke-width="1.4"/><path d="M7 18 C5 15 7 10 10 8 C13 6 16 6 17 8 C18 10 14 13 13 15 C11 18 9 20 7 18 Z" fill="#8ab0d8"/><circle cx="12" cy="10" r="2.2" fill="#1a3aa0"/></g><rect x="18" y="680" width="1" height="1" fill="#b0b0b0"/><rect x="18" y="683" width="1" height="1" fill="#b0b0b0"/><rect x="21" y="680" width="1" height="1" fill="#b0b0b0"/><rect x="21" y="683" width="1" height="1" fill="#b0b0b0"/><rect x="24" y="680" width="1" height="1" fill="#b0b0b0"/><rect x="24" y="683" width="1" height="1" fill="#b0b0b0"/><rect x="27" y="680" width="1" height="1" fill="#b0b0b0"/><rect x="27" y="683" width="1" height="1" fill="#b0b0b0"/><rect x="30" y="680" width="1" height="1" fill="#b0b0b0"/><rect x="30" y="683" width="1" height="1" fill="#b0b0b0"/><rect x="33" y="680" width="1" height="1" fill="#b0b0b0"/><rect x="33" y="683" width="1" height="1" fill="#b0b0b0"/><rect x="36" y="680" width="1" height="1" fill="#b0b0b0"/><rect x="36" y="683" width="1" height="1" fill="#b0b0b0"/><g transform="translate(15,689)"><rect x="3" y="2" width="19" height="21" fill="#3a5a8a"/><rect x="3" y="2" width="5" height="21" fill="#1a2a4a"/><text x="10" y="18" font-size="13" fill="#fff" font-family="Liberation Sans">?</text></g><rect x="18" y="728" width="1" height="1" fill="#b0b0b0"/><rect x="18" y="731" width="1" height="1" fill="#b0b0b0"/><rect x="21" y="728" width="1" height="1" fill="#b0b0b0"/><rect x="21" y="731" width="1" height="1" fill="#b0b0b0"/><rect x="24" y="728" width="1" height="1" fill="#b0b0b0"/><rect x="24" y="731" width="1" height="1" fill="#b0b0b0"/><rect x="27" y="728" width="1" height="1" fill="#b0b0b0"/><rect x="27" y="731" width="1" height="1" fill="#b0b0b0"/><rect x="30" y="728" width="1" height="1" fill="#b0b0b0"/><rect x="30" y="731" width="1" height="1" fill="#b0b0b0"/><rect x="33" y="728" width="1" height="1" fill="#b0b0b0"/><rect x="33" y="731" width="1" height="1" fill="#b0b0b0"/><rect x="36" y="728" width="1" height="1" fill="#b0b0b0"/><rect x="36" y="731" width="1" height="1" fill="#b0b0b0"/><g transform="translate(15,737)"><rect x="2" y="2" width="19" height="18" fill="#fff" stroke="#5a8ac6"/><rect x="2" y="2" width="19" height="4" fill="#8fb2de"/><path d="M2 10h19M2 14h19M8 6v14" stroke="#8fb2de"/><path d="M8 16 A6 6 0 0 1 19 12 L21 10 L22 16 L16 16 L18 14 A4 4 0 0 0 10 17 Z" fill="#40b040"/><path d="M22 18 A6 6 0 0 1 11 22 L9 24 L8 18 L14 18 L12 20 A4 4 0 0 0 20 17 Z" fill="#40b040"/></g></svg>
<div class="t" style="left:57px;top:117px;">Layers</div>
<svg style="left:396px;top:119px" width="28" height="14" viewBox="396 119 28 14"><rect x="397.5" y="120.5" width="10" height="10" rx="2" fill="none" stroke="#666" stroke-width="1"/><rect x="401" y="122.5" width="4.5" height="4" fill="none" stroke="#666" stroke-width="1"/><rect x="399.5" y="124.5" width="4.5" height="4" fill="#efefef" stroke="#666" stroke-width="1"/><rect x="411.5" y="120.5" width="10" height="10" rx="2" fill="none" stroke="#666" stroke-width="1"/><path d="M414 123 L419 128 M419 123 L414 128" stroke="#555" stroke-width="1.8"/></svg>
<svg style="left:50px;top:135px" width="220" height="30" viewBox="50 135 220 30"><rect x="57.5" y="139.5" width="23" height="22" rx="2.5" fill="#dcdcdc" stroke="#b4b4b4"/><g transform="translate(59,141)"><path d="M3 15 L8 10 L12 14 L7 19 Z" fill="#f0a030"/><path d="M2 14 L6 11 L8 13 L4 17 Z" fill="#4a7ac0"/><path d="M3 17 L7 13 L9 15 L5 19 Z" fill="#e03030"/><path d="M10 12 L17 4" stroke="#c89a10" stroke-width="2"/></g><g transform="translate(84,141)"><rect x="4" y="5" width="9" height="12" fill="none" stroke="#666" stroke-width="0.9"/><path d="M7 3 V17 M10 1 V17" stroke="#666" stroke-width="0.9"/><circle cx="14" cy="16" r="3.5" fill="#4a9a4a"/><path d="M14 14v4M12 16h4" stroke="#fff" stroke-width="1"/></g><g transform="translate(109,141)"><path d="M1 10 C5 4 14 4 18 10 C14 14 5 14 1 10 Z" fill="#ddd" stroke="#888" stroke-width="0.8"/><circle cx="9.5" cy="9.5" r="3.2" fill="#3a6ac0"/><path d="M13 15 L21 15 L17 19 Z" fill="#666"/></g><g transform="translate(134,141)"><path d="M2 3 H18 L12 10 V18 L8 18 V10 Z" fill="#4a8ad0"/><rect x="2" y="2" width="16" height="3" fill="#f2d020"/></g><g transform="translate(159,141)"><text x="1" y="13" font-size="19" fill="#6a2a8a" font-family="Liberation Serif">ε</text><path d="M9 12 h7 v8 h-7 Z" fill="#bbb"/></g><path d="M182 148 L190 148 L186 152 Z" fill="#555"/><g transform="translate(196,141)"><rect x="2" y="4" width="9" height="14" fill="none" stroke="#d0a040" stroke-width="0.8" stroke-dasharray="1.5 1"/><path d="M13 2 V14 M9 11 L13 17 L17 11 Z" stroke="#3a6ac0" stroke-width="2.4" fill="#3a6ac0"/></g><g transform="translate(221,141)"><rect x="2" y="4" width="9" height="14" fill="none" stroke="#d0a040" stroke-width="0.8" stroke-dasharray="1.5 1"/><path d="M13 18 V6 M9 9 L13 3 L17 9 Z" stroke="#3a6ac0" stroke-width="2.4" fill="#3a6ac0"/></g><g transform="translate(246,141)"><rect x="2.5" y="3.5" width="14" height="13" fill="#fff" stroke="#555" stroke-width="1"/><rect x="13" y="15" width="7" height="4" rx="1" fill="#e03030"/><rect x="14.5" y="16.5" width="4" height="1" fill="#fff"/></g></svg>
<div class="a" style="left:54px;top:166px;width:370px;height:790px;background:#fff;border:1px solid #ababab"></div>
<svg style="left:54px;top:166px" width="370" height="160" viewBox="54 166 370 160"><rect x="55" y="246" width="368" height="19" fill="#308cc6"/><path d="M60 174 L68 174 L64 179 Z" fill="#555"/><path d="M60 253 L68 253 L64 258 Z" fill="#222"/><rect x="77.5" y="169.5" width="13" height="13" fill="#fff" stroke="#8c8c8c" stroke-width="1"/><rect x="77.5" y="248.5" width="13" height="13" fill="#fff" stroke="#8c8c8c" stroke-width="1"/><path d="M80 254.5 L82.5 259 L88 250.5" fill="none" stroke="#000" stroke-width="1.8"/><path d="M98.5 171.5 C101 170 104 172 106 172 C108 172 110 170 112 171.5 C113 174 111 175 112 178 C110 180 108 177 105 178 C102 179 100 182 98 180 C97 177 98 175 98.5 171.5 Z" fill="#e4e4e4" stroke="#999" stroke-width="0.9"/><path d="M98.5 250.5 C101 249 104 251 106 251 C108 251 110 249 112 250.5 C113 253 111 254 112 257 C110 259 108 256 105 257 C102 258 100 261 98 259 C97 256 98 254 98.5 250.5 Z" fill="#c8dcec" stroke="#8ab" stroke-width="0.9"/><rect x="97.5" y="189.5" width="13" height="13" fill="#fff" stroke="#8c8c8c" stroke-width="1"/><path d="M100 195.5 L102.5 200 L108 191.5" fill="none" stroke="#000" stroke-width="1.8"/><rect x="117" y="188" width="17" height="16" fill="#e6e6e6"/><rect x="97.5" y="209.5" width="13" height="13" fill="#fff" stroke="#8c8c8c" stroke-width="1"/><path d="M100 215.5 L102.5 220 L108 211.5" fill="none" stroke="#000" stroke-width="1.8"/><rect x="117" y="208" width="17" height="16" fill="#dfb0d9"/><rect x="97.5" y="229.5" width="13" height="13" fill="#fff" stroke="#8c8c8c" stroke-width="1"/><path d="M100 235.5 L102.5 240 L108 231.5" fill="none" stroke="#000" stroke-width="1.8"/><rect x="117" y="228" width="17" height="16" fill="#bb63b0"/><rect x="97.5" y="267.5" width="13" height="13" fill="#fff" stroke="#8c8c8c" stroke-width="1"/><path d="M100 273.5 L102.5 278 L108 269.5" fill="none" stroke="#000" stroke-width="1.8"/><rect x="117" y="266" width="15" height="15" fill="#e6e6e6"/><rect x="97.5" y="286.5" width="13" height="13" fill="#fff" stroke="#8c8c8c" stroke-width="1"/><path d="M100 292.5 L102.5 297 L108 288.5" fill="none" stroke="#000" stroke-width="1.8"/><rect x="117" y="285" width="15" height="15" fill="#ace2e2"/><rect x="97.5" y="305.5" width="13" height="13" fill="#fff" stroke="#8c8c8c" stroke-width="1"/><path d="M100 311.5 L102.5 316 L108 307.5" fill="none" stroke="#000" stroke-width="1.8"/><rect x="117" y="304" width="15" height="15" fill="#5cc5c7"/></svg><div class="t" style="left:119px;top:168px;font-style:italic;font-weight:bold;color:#777">cfr</div><div class="t" style="left:141px;top:188px;">0 - 5</div><div class="t" style="left:141px;top:208px;">5 - 25</div><div class="t" style="left:141px;top:228px;">25 - 100</div><div class="t" style="left:119px;top:247px;font-weight:bold;color:#fff;font-size:14px;letter-spacing:0.5px"><span style="border-bottom:1px solid #fff;line-height:14px;display:inline-block">recovery_rate</span></div><div class="t" style="left:139px;top:266px;">0 - 5</div><div class="t" style="left:139px;top:285px;">5 - 25</div><div class="t" style="left:139px;top:304px;">25 - 100</div>
<div class="a" style="left:120px;top:957px;width:77px;height:24px;background:#dadada;border:1px solid #c3c3c3;border-top:none;border-radius:0 0 3px 3px"></div>
<div class="a" style="left:54px;top:955px;width:67px;height:27px;background:#efefef;border:1px solid #bdbdbd;border-top:none;border-radius:0 0 3px 3px"></div>
<div class="t" style="left:65px;top:960px;">Layers</div>
<div class="t" style="left:133px;top:960px;">Browser</div>
<div class="a" style="left:430px;top:116px;width:960px;height:868px;background:#fff;border:1px solid #a8a8a8"></div>
<svg style="left:431px;top:117px" width="959" height="866" viewBox="431 117 959 866"><path d="M838.7 347.1 L844.0 344.0 L844.0 328.9 L845.5 318.2 L840.9 310.7 L844.0 300.0 L845.5 295.5 L847.0 280.3 L850.8 265.2 L863.7 259.9 L871.3 261.4 L877.3 260.6 L884.9 264.4 L895.5 271.2 L904.6 275.8 L915.3 278.1 L922.8 276.5 L928.9 269.7 L929.7 263.6 L933.5 266.7 L937.2 275.0 L935.7 280.3 L931.9 286.4 L929.7 294.0 L928.9 303.1 L930.4 313.7 L933.5 321.3 L939.5 324.3 L942.6 328.9 L947.1 336.4 L942.6 347.1 L936.5 362.2 L935.5 364.6 L931.7 372.2 L929.8 377.9 L924.1 385.5 L912.7 395.0 L901.3 400.7 L899.4 406.4 L893.7 417.7 L890.0 429.1 L893.7 432.9 L899.4 446.2 L905.1 455.6 L903.2 461.3 L901.3 472.7 L908.9 484.1 L918.4 491.7 L931.7 497.3 L943.0 504.9 L950.6 510.6 L956.3 522.0 L954.4 531.5 L950.6 529.6 L946.8 518.2 L943.0 506.8 L935.5 501.1 L924.1 497.3 L912.7 493.6 L903.2 495.5 L893.7 503.0 L891.8 508.7 L882.4 506.8 L874.8 506.8 L863.4 503.0 L855.8 497.3 L852.0 484.1 L855.8 478.4 L867.2 472.7 L872.9 468.9 L871.0 457.5 L863.4 453.7 L855.8 450.0 L850.1 453.7 L850.1 468.9 L844.5 468.9 L840.7 461.3 L835.0 453.7 L831.2 451.8 L825.5 440.5 L817.9 419.6 L816.0 400.7 L810.3 395.0 L809.4 381.7 L812.2 374.1 L817.9 372.2 L823.6 383.6 L829.3 389.3 L836.9 387.4 L844.5 381.7 L838.8 377.9 L836.9 359.0 L838.8 345.7 Z" fill="#ace2e2"/><path d="M838.7 347.1 L844.0 344.0 L844.0 328.9 L845.5 318.2 L840.9 310.7 L844.0 300.0 L845.5 295.5 L847.0 280.3 L850.8 265.2 L863.7 259.9 L871.3 261.4 L877.3 260.6 L884.9 264.4 L895.5 271.2 L904.6 275.8 L915.3 278.1 L922.8 276.5 L928.9 269.7 L929.7 263.6 L933.5 266.7 L937.2 275.0 L935.7 280.3 L931.9 286.4 L929.7 294.0 L928.9 303.1 L930.4 313.7 L933.5 321.3 L939.5 324.3 L942.6 328.9 L947.1 336.4 L942.6 347.1 L936.5 362.2 L941.1 351.4 L935.5 364.6 L931.7 372.2 L929.8 377.9 L924.1 385.5 L912.7 395.0 L901.3 400.7 L899.4 406.4 L893.7 417.7 L890.0 429.1 L888.1 412.0 L884.3 396.9 L880.5 387.4 L865.3 385.5 L859.6 379.8 L860.7 380.4 L848.5 378.9 L845.5 380.4 L840.9 380.4 Z" fill="#e6e6e6" stroke="#fff" stroke-width="0.9" stroke-linejoin="round"/><path d="M904.6 315.2 L930.4 313.7 L933.5 321.3 L939.5 324.3 L942.6 328.9 L947.1 336.4 L942.6 347.1 L936.5 362.2 L925.9 365.3 L909.2 371.3 L903.1 362.2 L891.0 354.6 L898.6 348.6 L900.1 334.9 L900.1 322.8 Z" fill="#ace2e2" stroke="#fff" stroke-width="0.9" stroke-linejoin="round"/><path d="M838.7 347.1 L845.5 345.5 L848.5 350.1 L850.0 356.2 L847.0 365.3 L845.5 380.4 L840.9 380.4 L837.9 362.2 Z" fill="#ace2e2" stroke="#fff" stroke-width="0.9" stroke-linejoin="round"/><path d="M870.5 262.1 L877.3 260.6 L884.9 264.4 L895.5 271.2 L904.6 275.8 L915.3 278.1 L922.8 276.5 L928.9 269.7 L929.7 263.6 L933.5 266.7 L937.2 275.0 L935.7 280.3 L931.9 286.4 L929.7 294.0 L928.9 303.1 L929.7 312.9 L904.6 315.2 L894.0 307.6 L888.7 300.0 L895.5 284.9 L896.3 278.1 L884.9 271.2 L875.8 266.7 L871.3 266.7 Z" fill="#5cc5c7" stroke="#fff" stroke-width="0.9" stroke-linejoin="round"/><path d="M850.0 301.6 L863.7 294.7 L869.8 294.0 L872.8 298.5 L875.8 301.6 L876.6 310.7 L872.8 315.2 L868.2 322.8 L866.7 331.9 L857.6 332.7 L851.6 325.8 L848.5 318.2 L845.5 315.2 L847.0 309.1 Z" fill="#5cc5c7" stroke="#fff" stroke-width="0.9" stroke-linejoin="round"/><path d="M854.6 347.1 L860.7 345.5 L865.2 350.1 L866.0 362.2 L865.2 371.3 L860.7 380.4 L848.5 378.9 L846.3 366.8 L848.5 362.2 L853.1 356.2 Z" fill="#5cc5c7" stroke="#fff" stroke-width="0.9" stroke-linejoin="round"/><path d="M810.3 374.1 L817.9 371.3 L823.6 383.6 L829.3 389.3 L844.5 381.7 L857.7 380.8 L865.3 385.5 L867.2 395.0 L861.5 400.7 L853.9 398.8 L844.5 402.6 L836.9 408.2 L831.2 402.6 L825.5 402.6 L817.9 400.7 L812.2 395.0 L809.4 383.6 Z" fill="#5cc5c7" stroke="#fff" stroke-width="0.9" stroke-linejoin="round"/><path d="M817.9 400.7 L831.2 402.6 L836.9 408.2 L829.3 419.6 L836.9 427.2 L840.7 434.8 L844.5 446.2 L835.0 453.7 L831.2 451.8 L825.5 440.5 L817.9 419.6 Z" fill="#ace2e2" stroke="#fff" stroke-width="0.9" stroke-linejoin="round"/><path d="M831.2 412.0 L842.6 402.6 L853.9 398.8 L859.6 406.4 L859.6 429.1 L840.7 432.9 L829.3 421.5 Z" fill="#ace2e2" stroke="#fff" stroke-width="0.9" stroke-linejoin="round"/><path d="M853.9 398.8 L861.5 400.7 L867.2 395.0 L865.3 385.5 L880.5 387.4 L884.3 396.9 L888.1 412.0 L889.0 429.1 L882.4 429.1 L871.0 430.0 L869.1 436.7 L859.6 429.1 L859.6 406.4 Z" fill="#ace2e2" stroke="#fff" stroke-width="0.9" stroke-linejoin="round"/><path d="M840.7 432.9 L859.6 429.1 L869.1 436.7 L861.5 446.2 L855.8 450.0 L850.1 453.7 L844.5 446.2 Z" fill="#ace2e2" stroke="#fff" stroke-width="0.9" stroke-linejoin="round"/><path d="M861.5 446.2 L871.0 430.0 L882.4 429.1 L887.1 434.8 L888.1 448.1 L878.6 453.7 L869.1 453.7 Z" fill="#5cc5c7" stroke="#fff" stroke-width="0.9" stroke-linejoin="round"/><path d="M878.6 453.7 L888.1 449.0 L893.7 461.3 L888.1 467.0 L882.4 467.0 L878.6 461.3 Z" fill="#5cc5c7" stroke="#fff" stroke-width="0.9" stroke-linejoin="round"/><path d="M835.0 453.7 L844.5 446.2 L848.2 453.7 L850.1 468.9 L844.5 470.8 L840.7 461.3 Z" fill="#5cc5c7" stroke="#fff" stroke-width="0.9" stroke-linejoin="round"/><path d="M871.0 453.7 L878.6 453.7 L876.7 468.9 L871.0 472.7 Z" fill="#ace2e2" stroke="#fff" stroke-width="0.9" stroke-linejoin="round"/><path d="M853.9 480.3 L867.2 472.7 L872.9 468.9 L872.9 484.1 L863.4 486.0 Z" fill="#ace2e2" stroke="#fff" stroke-width="0.9" stroke-linejoin="round"/><path d="M872.9 468.9 L882.4 467.0 L888.1 467.0 L895.6 463.2 L903.2 472.7 L893.7 486.0 L884.3 491.7 L874.8 484.1 Z" fill="#ace2e2" stroke="#fff" stroke-width="0.9" stroke-linejoin="round"/><path d="M852.0 484.1 L863.4 486.0 L872.9 484.1 L884.3 491.7 L891.8 506.8 L882.4 506.8 L874.8 506.8 L863.4 503.0 L855.8 497.3 Z" fill="#ace2e2" stroke="#fff" stroke-width="0.9" stroke-linejoin="round"/><path d="M882.4 466.1 L886.2 463.2 L890.0 468.9 L888.1 476.5 L883.3 476.5 Z" fill="#ffffff"/><path d="M826.4 498.3 L832.1 500.2 L836.9 501.5 L835.0 504.9 L829.7 503.4 Z" fill="#5cc5c7"/><path d="M903.7 469.5 L908.4 479.0 L907.5 482.7 L914.1 489.4 L919.8 492.2 L925.5 494.1 L933.1 495.5 L935.9 491.3 L936.9 488.4 L944.4 484.6 L959.6 490.3 L971.0 497.0 L974.8 499.8 L978.6 504.5 L984.2 503.6 L988.0 499.8 L987.1 494.1 L985.2 491.3 L988.0 488.4 L990.9 494.1 L993.7 495.1 L1003.2 496.0 L1012.7 500.7 L1019.3 503.6 L1012.7 506.4 L1000.3 504.5 L998.4 513.1 L1001.3 516.9 L1010.8 526.3 L1010.8 533.0 L1016.5 535.8 L1016.5 538.7 L1010.8 540.5 L997.5 541.5 L987.1 539.6 L986.1 528.2 L982.3 524.4 L974.8 516.9 L963.4 509.3 L959.6 501.7 L953.9 498.9 L949.2 493.2 L945.4 495.1 L946.3 505.5 L952.0 516.9 L954.9 524.4 L954.9 530.1 L951.1 532.0 L948.2 529.2 L946.3 520.6 L940.6 514.0 L931.2 507.4 L923.6 499.8 L911.3 494.1 L902.7 496.0 L894.2 500.7 L893.3 507.4 L885.7 510.2 L880.0 508.3 L880.0 483.7 Z" fill="#ace2e2"/><path d="M938.8 480.8 L946.3 475.2 L955.8 475.2 L963.4 479.0 L971.0 486.5 L974.8 492.2 L974.8 497.9 L971.0 497.0 L960.5 491.3 L944.4 484.6 Z" fill="#e6e6e6" stroke="#fff" stroke-width="0.9" stroke-linejoin="round"/><path d="M917.9 480.4 L921.7 482.7 L930.2 489.4 L928.3 490.3 L919.8 484.6 Z" fill="#ace2e2"/><path d="M931.2 482.7 L935.0 480.8 L936.9 487.5 L934.0 488.4 Z" fill="#ace2e2"/><path d="M1024.0 507.4 L1029.7 488.4 L1035.4 491.3 L1041.1 499.8 L1040.1 511.2 L1030.7 514.0 Z" fill="#e6e6e6"/><path d="M969.1 535.8 L974.8 534.9 L984.2 547.2 L982.3 549.1 L974.8 543.4 Z" fill="#e6e6e6"/><path d="M996.6 540.5 L1007.0 539.6 L1016.5 538.7 L1020.2 535.8 L1027.8 538.7 L1029.7 543.4 L1026.9 550.0 L1026.9 560.0 L1014.6 560.0 L1016.5 550.0 L1010.8 547.2 L1003.2 545.3 Z" fill="#e6e6e6"/><path d="M913.2 516.9 L920.7 515.0 L927.4 520.6 L923.6 530.1 L916.0 526.3 Z" fill="#e6e6e6"/><path d="M1010.8 521.6 L1016.5 525.4 L1024.0 528.2 L1031.6 531.1 L1027.8 532.0 L1017.4 528.2 L1012.7 525.4 Z" fill="#ace2e2"/><path d="M984.3 563.2 L993.7 567.0 L1008.9 576.5 L1020.3 591.7 L1024.1 603.0 L1016.5 597.3 L1005.1 591.7 L997.5 584.1 L986.2 587.9 L980.5 591.7 L986.2 576.5 Z" fill="#e6e6e6"/><path d="M917.9 561.3 L927.4 559.4 L925.5 572.7 L921.7 582.2 L918.9 572.7 Z" fill="#e6e6e6"/><path d="M944.5 568.9 L953.9 567.0 L955.8 574.6 L950.1 576.5 Z" fill="#e6e6e6"/><path d="M914.1 440.0 L921.7 440.0 L921.7 451.4 L919.8 459.0 L916.0 451.4 Z" fill="#ace2e2"/><path d="M837.0 518.0 L846.0 515.0 L865.0 518.0 L878.0 528.0 L883.0 537.0 L883.0 579.0 L875.0 576.0 L867.0 563.0 L861.0 553.0 L861.0 540.0 L859.0 530.0 L850.0 522.0 L840.0 524.0 Z" fill="#5cc5c7"/><path d="M865.0 518.0 L879.0 527.0 L891.0 527.0 L897.0 539.0 L897.0 557.0 L892.0 571.0 L883.0 579.0 L883.0 537.0 L878.0 528.0 Z" fill="#ace2e2"/><path d="M1035.9 563.4 L1054.1 566.3 L1068.9 564.0 L1080.3 564.6 L1086.0 570.2 L1086.6 574.8 L1095.1 581.6 L1093.4 591.9 L1093.9 603.2 L1098.5 613.5 L1102.5 624.8 L1099.6 631.7 L1091.7 635.7 L1083.7 635.1 L1082.6 630.5 L1086.0 621.4 L1083.7 611.2 L1084.8 603.2 L1082.6 593.0 L1078.0 590.7 L1078.0 578.2 L1070.1 579.3 L1063.2 582.8 L1057.5 577.1 L1053.0 579.3 L1046.2 575.9 L1040.5 578.2 Z" fill="#e6e6e6"/><path d="M1040.5 578.2 L1046.2 575.9 L1053.0 579.3 L1057.5 577.1 L1063.2 582.8 L1070.1 579.3 L1078.0 578.2 L1078.0 590.7 L1082.6 593.0 L1084.8 603.2 L1083.7 611.2 L1086.0 621.4 L1082.6 630.5 L1083.1 635.1 L1080.3 627.1 L1072.3 627.1 L1071.2 620.3 L1068.9 616.9 L1072.3 603.2 L1065.5 601.0 L1059.8 595.3 L1054.1 589.6 L1048.4 587.3 Z" fill="#5cc5c7"/><path d="M1037.1 614.6 L1043.9 619.2 L1047.3 620.3 L1048.4 624.8 L1054.1 627.1 L1061.0 624.8 L1067.8 621.4 L1071.2 623.7 L1072.3 632.8 L1072.3 641.9 L1071.8 651.0 L1076.9 659.0 L1073.5 662.4 L1067.8 664.7 L1065.5 673.8 L1062.1 680.0 L1059.2 673.8 L1059.8 662.4 L1054.1 643.0 L1051.9 639.6 L1047.3 646.5 L1042.8 644.2 L1041.6 637.4 L1039.9 623.7 Z" fill="#5cc5c7"/><path d="M1040.5 607.8 L1046.2 606.6 L1050.7 611.2 L1051.9 616.9 L1047.3 615.7 L1042.8 612.3 Z" fill="#e6e6e6"/><path d="M1067.8 664.7 L1073.5 662.4 L1078.0 660.1 L1081.4 669.2 L1083.7 680.0 L1065.5 680.0 Z" fill="#e6e6e6"/><path d="M1063.2 680.3 L1072.7 672.7 L1080.3 670.8 L1084.1 678.4 L1087.9 689.8 L1076.5 687.9 L1068.9 686.0 Z" fill="#e6e6e6"/><path d="M1035.9 660.1 L1040.5 657.8 L1047.3 656.7 L1046.2 659.5 L1039.3 661.3 Z" fill="#5cc5c7"/><path d="M985.5 562.7 L996.9 570.3 L1006.4 576.0 L1017.7 583.6 L1023.4 602.6 L1015.8 596.9 L1004.5 591.2 L995.0 583.6 L985.5 587.4 L979.8 595.0 L985.5 577.9 Z" fill="#e6e6e6"/><path d="M1000.7 559.0 L1004.5 559.0 L1010.1 570.3 L1006.4 572.2 Z" fill="#e6e6e6"/><path d="M1015.8 547.6 L1029.1 540.0 L1027.2 562.7 L1019.6 560.9 Z" fill="#e6e6e6"/><path d="M943.8 568.4 L951.4 566.5 L955.2 570.3 L953.3 576.0 L947.6 574.1 Z" fill="#e6e6e6"/><path d="M1097.3 668.9 L1103.0 670.8 L1103.0 691.7 L1099.2 684.1 Z" fill="#e6e6e6"/><path d="M1120.1 691.7 L1125.8 693.6 L1127.7 703.0 L1122.0 706.8 Z" fill="#e6e6e6"/><path d="M1006.4 627.2 L1010.1 629.1 L1010.1 633.8 L1007.3 632.9 Z" fill="#ace2e2"/><path d="M1036.7 658.5 L1046.2 655.6 L1047.1 659.4 L1038.6 661.3 Z" fill="#ace2e2"/><path d="M1013.9 697.3 L1025.3 687.9 L1036.7 684.1 L1046.2 687.9 L1050.0 697.3 L1048.1 704.9 L1038.6 710.6 L1023.4 710.6 L1012.0 704.9 Z" fill="#5cc5c7"/><path d="M1053.7 729.6 L1058.5 729.6 L1060.4 735.3 L1055.6 736.2 Z" fill="#5cc5c7"/><path d="M920.3 560.9 L927.9 559.0 L926.9 570.3 L924.1 581.7 L920.3 577.9 Z" fill="#e6e6e6"/><path d="M943.0 568.4 L954.4 568.4 L955.4 574.1 L950.6 577.0 L944.9 574.1 Z" fill="#e6e6e6"/><path d="M915.7 597.1 L920.0 595.7 L928.5 600.0 L935.6 604.2 L942.7 609.9 L948.4 615.6 L959.8 612.0 L966.9 614.2 L969.7 619.9 L976.8 615.6 L979.7 618.4 L978.2 624.1 L974.0 631.2 L965.5 635.5 L959.8 644.0 L955.5 651.1 L947.0 654.0 L938.4 656.8 L929.9 661.1 L922.8 666.8 L920.0 669.6 L918.5 661.1 L920.0 651.1 L922.8 636.9 L925.6 625.5 L927.1 611.3 L927.1 602.8 L918.5 601.4 Z" fill="#ace2e2"/><path d="M928.5 600.0 L935.6 604.2 L939.9 608.5 L948.4 615.6 L938.4 617.0 L932.0 624.1 L929.9 615.6 L928.5 607.1 Z" fill="#5cc5c7" stroke="#fff" stroke-width="0.9" stroke-linejoin="round"/><path d="M949.8 656.8 L955.5 655.4 L956.9 662.5 L952.7 669.6 L947.0 666.8 Z" fill="#e6e6e6"/><path d="M969.7 646.9 L981.1 642.6 L992.5 644.0 L998.2 649.7 L995.3 661.1 L989.6 669.6 L986.8 672.5 L983.9 681.0 L974.0 698.1 L979.7 706.6 L985.4 723.7 L983.9 732.2 L976.8 737.9 L966.9 736.5 L964.0 726.5 L954.1 718.0 L942.7 709.4 L941.3 698.1 L949.8 692.4 L961.2 686.7 L964.0 675.3 L964.0 665.4 Z" fill="#ace2e2"/><path d="M1023.7 628.4 L1022.3 639.8 L1020.9 651.1 L1013.8 666.8 L1001.0 686.7 L993.9 698.1 L989.6 710.9 L987.5 719.4 L989.6 700.9 L995.3 681.0 L1003.8 666.8 L1012.4 654.0 L1018.1 644.0 Z" fill="#ace2e2"/><path d="M995.3 730.8 L1002.4 727.9 L1003.8 733.6 L998.2 735.0 Z" fill="#e6e6e6"/><path d="M815.1 576.0 L820.8 578.9 L825.5 582.7 L832.1 584.5 L836.9 586.4 L837.8 590.2 L833.1 591.2 L827.4 588.9 L822.7 589.7 L818.9 586.4 L817.0 581.7 Z" fill="#5cc5c7"/><path d="M816.0 593.1 L820.8 595.0 L823.6 600.7 L821.7 606.4 L817.9 604.5 L816.0 598.8 Z" fill="#5cc5c7"/><path d="M795.5 622.7 L798.4 626.5 L798.4 636.0 L795.5 643.6 L800.3 651.2 L802.2 660.7 L806.0 665.4 L798.4 672.0 L788.9 675.8 L783.2 681.5 L782.3 688.2 L774.7 691.9 L763.3 693.8 L759.5 697.6 L757.6 707.1 L753.8 714.7 L746.3 724.2 L740.6 729.9 L733.0 733.6 L725.4 735.5 L721.6 745.0 L710.2 756.4 L702.7 758.3 L697.0 765.9 L686.5 769.7 L680.9 773.5 L682.7 761.1 L688.4 753.6 L697.9 741.2 L707.4 733.6 L715.9 727.0 L725.4 722.3 L735.8 708.1 L749.1 696.7 L754.8 689.1 L760.5 681.5 L770.0 672.0 L778.5 666.4 L788.0 658.8 L790.8 651.2 L785.1 645.5 L790.8 641.7 L792.7 634.1 L792.7 626.5 Z" fill="#5cc5c7"/><path d="M809.8 662.6 L819.2 661.6 L815.5 668.2 L810.7 667.3 Z" fill="#5cc5c7"/><path d="M682.7 776.3 L688.4 776.3 L687.5 782.0 L684.6 782.0 Z" fill="#5cc5c7"/><path d="M669.5 787.7 L674.2 787.7 L675.2 795.3 L672.3 800.0 L669.5 797.2 Z" fill="#5cc5c7"/><path d="M667.0 793.0 L671.0 790.0 L673.0 800.0 L669.0 802.0 Z" fill="#5cc5c7"/><path d="M1092.9 702.3 L1102.0 709.1 L1115.6 718.2 L1124.7 722.7 L1129.3 727.3 L1133.8 745.5 L1138.4 763.7 L1142.9 777.3 L1139.6 780.0 L1144.9 790.6 L1147.5 806.5 L1151.5 817.1 L1150.2 830.4 L1144.9 841.0 L1136.9 846.3 L1132.9 854.3 L1131.6 864.9 L1130.3 872.8 L1126.3 862.2 L1123.7 849.0 L1118.4 838.4 L1114.4 826.4 L1118.4 802.5 L1113.1 807.9 L1107.7 822.4 L1103.8 830.4 L1099.8 838.4 L1093.2 846.3 L1090.5 854.3 L1091.8 862.2 L1098.5 875.5 L1105.1 883.4 L1106.4 888.8 L1099.8 899.4 L1089.2 912.6 L1081.2 902.0 L1083.9 888.8 L1075.9 892.7 L1060.0 890.1 L1047.4 886.5 L1036.0 877.4 L1026.9 866.1 L1022.4 854.7 L1020.1 841.0 L1026.9 831.9 L1031.5 825.1 L1026.9 813.7 L1020.1 806.9 L1006.4 802.4 L995.1 800.1 L988.2 809.2 L990.5 818.3 L983.7 813.7 L974.6 806.9 L965.5 800.1 L954.1 797.8 L942.7 802.4 L933.6 818.3 L933.6 827.4 L926.8 836.5 L920.0 845.6 L920.0 831.9 L929.1 811.5 L938.2 793.3 L954.1 786.4 L972.3 770.5 L988.2 763.7 L995.1 756.9 L1001.9 761.4 L1015.5 777.3 L1029.2 781.9 L1038.3 777.3 L1036.0 766.0 L1047.4 761.4 L1058.8 763.7 L1061.0 743.2 L1070.1 747.8 L1079.2 745.5 L1083.8 740.9 L1095.2 736.4 L1095.2 720.5 Z" fill="#e6e6e6"/><path d="M1095.2 720.5 L1108.8 720.5 L1108.8 734.1 L1104.3 754.6 L1083.8 756.9 L1083.8 740.9 L1095.2 736.4 Z" fill="#5cc5c7" stroke="#fff" stroke-width="0.9" stroke-linejoin="round"/><path d="M1061.0 743.2 L1070.1 747.8 L1079.2 745.5 L1083.8 740.9 L1083.8 761.4 L1054.2 770.5 L1049.7 772.8 L1038.3 775.1 L1036.0 766.0 L1047.4 761.4 L1058.8 763.7 Z" fill="#ace2e2" stroke="#fff" stroke-width="0.9" stroke-linejoin="round"/><path d="M1051.9 770.5 L1083.8 762.6 L1088.3 777.3 L1092.9 809.2 L1083.8 813.7 L1074.7 820.6 L1065.6 818.3 L1056.5 809.2 L1049.7 795.5 L1049.7 781.9 Z" fill="#5cc5c7" stroke="#fff" stroke-width="0.9" stroke-linejoin="round"/><path d="M999.6 761.4 L1006.4 759.1 L1013.3 770.5 L1013.3 786.4 L1004.2 788.7 L999.6 781.9 Z" fill="#5cc5c7" stroke="#fff" stroke-width="0.9" stroke-linejoin="round"/><path d="M1004.2 797.8 L1017.8 784.2 L1033.7 779.6 L1047.4 779.6 L1049.7 786.4 L1033.7 786.4 L1022.4 797.8 L1020.1 806.9 L1011.0 804.6 Z" fill="#5cc5c7" stroke="#fff" stroke-width="0.9" stroke-linejoin="round"/><path d="M1022.4 797.8 L1033.7 786.4 L1049.7 786.4 L1049.7 795.5 L1056.5 809.2 L1042.8 813.7 L1033.7 818.3 L1026.9 813.7 Z" fill="#ace2e2" stroke="#fff" stroke-width="0.9" stroke-linejoin="round"/><path d="M967.8 797.8 L979.1 781.9 L992.8 779.6 L999.6 791.0 L999.6 800.1 L988.2 809.2 L992.8 820.6 L983.7 816.0 L974.6 811.5 Z" fill="#ace2e2" stroke="#fff" stroke-width="0.9" stroke-linejoin="round"/><path d="M1042.8 809.2 L1056.5 809.2 L1065.6 818.3 L1079.2 816.0 L1083.8 836.5 L1079.2 854.7 L1063.3 854.7 L1061.0 836.5 L1054.2 841.0 L1047.4 834.2 L1042.8 827.4 Z" fill="#ace2e2" stroke="#fff" stroke-width="0.9" stroke-linejoin="round"/><path d="M1092.5 792.6 L1105.1 792.6 L1106.4 802.5 L1110.4 807.9 L1118.4 801.9 L1117.0 811.8 L1113.1 819.8 L1105.1 826.4 L1098.5 829.1 L1098.5 813.2 L1093.2 811.8 L1092.5 807.9 Z" fill="#5cc5c7" stroke="#fff" stroke-width="0.9" stroke-linejoin="round"/><path d="M1083.9 813.2 L1098.5 813.2 L1098.5 829.1 L1103.8 830.4 L1099.8 838.4 L1093.2 846.3 L1090.5 854.3 L1091.8 862.2 L1089.2 870.2 L1081.2 870.2 L1079.9 862.2 L1077.2 854.3 L1085.2 846.3 L1087.9 838.4 L1083.9 833.1 Z" fill="#ace2e2" stroke="#fff" stroke-width="0.9" stroke-linejoin="round"/><path d="M1106.4 833.1 L1109.1 831.7 L1111.1 838.4 L1110.4 845.0 L1107.7 841.0 Z" fill="#5cc5c7"/><path d="M1082.5 871.5 L1091.8 871.5 L1091.8 864.9 L1098.5 875.5 L1105.1 883.4 L1106.4 888.8 L1099.8 899.4 L1089.2 912.6 L1094.5 899.4 L1098.5 888.8 L1095.8 878.1 L1085.2 872.8 Z" fill="#5cc5c7" stroke="#fff" stroke-width="0.9" stroke-linejoin="round"/><path d="M1036.0 876.3 L1051.9 875.2 L1056.5 859.2 L1067.9 863.8 L1079.2 870.6 L1083.8 879.7 L1079.2 886.5 L1077.0 891.1 L1061.0 886.5 L1047.4 886.5 Z" fill="#5cc5c7" stroke="#fff" stroke-width="0.9" stroke-linejoin="round"/><path d="M992.7 755.9 L998.0 759.9 L1000.0 763.9 L1000.0 798.4 L992.7 801.0 L995.4 809.0 L990.0 814.3 L992.7 822.3 L987.4 818.3 L984.7 814.3 L979.4 814.3 L976.8 806.3 L975.4 801.0 L974.1 809.0 L968.8 817.0 L963.5 824.9 L962.2 819.6 L960.8 814.3 L962.2 806.3 L958.2 802.4 L950.2 803.7 L942.3 814.3 L938.3 819.6 L935.6 824.9 L931.7 840.8 L927.7 846.2 L921.0 843.5 L917.1 838.2 L918.4 832.9 L923.7 827.6 L926.3 819.6 L927.7 806.3 L934.3 793.1 L942.3 789.1 L952.9 786.4 L963.5 785.1 L971.5 779.8 L970.1 770.5 L975.4 766.5 L984.7 765.2 L990.0 761.2 Z" fill="#e6e6e6"/><path d="M982.1 779.8 L1000.0 779.8 L1000.0 798.4 L992.7 801.0 L995.4 809.0 L990.0 814.3 L992.7 822.3 L987.4 818.3 L984.7 814.3 L979.4 814.3 L976.8 806.3 L975.4 801.0 L968.8 798.4 L976.8 793.1 L980.8 790.4 Z" fill="#ace2e2" stroke="#fff" stroke-width="0.9" stroke-linejoin="round"/><path d="M917.1 835.5 L931.7 819.6 L939.6 820.9 L934.3 832.9 L927.7 846.2 L921.0 843.5 Z" fill="#ace2e2" stroke="#fff" stroke-width="0.9" stroke-linejoin="round"/><path d="M913.1 858.1 L919.7 855.4 L929.0 856.8 L937.0 860.8 L931.7 864.7 L929.0 868.7 L921.0 870.0 L915.7 864.7 Z" fill="#e6e6e6"/><path d="M866.5 892.3 L871.0 888.9 L877.8 887.8 L881.3 892.3 L886.9 891.2 L892.1 892.9 L886.9 897.5 L882.4 895.7 L876.7 895.7 L868.7 896.3 Z" fill="#e6e6e6"/><path d="M813.0 935.6 L819.8 931.0 L825.5 928.7 L831.2 925.3 L833.5 929.9 L832.3 934.4 L826.6 932.2 L819.8 936.7 L814.1 939.0 Z" fill="#e6e6e6"/><path d="M859.6 913.9 L864.2 912.8 L866.5 915.1 L864.2 917.9 L861.3 917.4 Z" fill="#e6e6e6"/><path d="M848.3 873.0 L850.8 873.0 L849.6 878.7 L847.7 878.7 Z" fill="#e6e6e6"/><path d="M793.7 946.9 L795.4 948.1 L795.9 953.8 L794.8 958.3 L793.7 953.8 Z" fill="#e6e6e6"/><path d="M890.9 222.5 L894.7 221.9 L897.5 224.4 L897.9 227.2 L893.7 226.8 Z" fill="#5cc5c7"/><path d="M916.9 213.6 L920.7 214.3 L919.9 216.6 L917.6 215.8 Z" fill="#5cc5c7"/><path d="M882.0 233.8 L883.5 234.8 L883.9 238.6 L882.4 238.2 Z" fill="#5cc5c7"/><path d="M884.3 247.1 L889.0 246.5 L893.7 247.3 L890.0 248.4 L885.2 248.6 Z" fill="#5cc5c7"/><path d="M915.5 242.4 L919.9 241.4 L920.3 244.3 L916.5 247.1 L913.6 249.6 Z" fill="#5cc5c7"/><path d="M912.7 149.5 L915.5 148.5 L913.6 155.2 L911.2 154.8 Z" fill="#e6e6e6"/><path d="M919.3 167.5 L922.2 166.5 L919.3 173.2 L916.1 176.0 L915.0 174.1 Z" fill="#e6e6e6"/><path d="M869.8 263.6 L869.0 280.3 L868.2 290.9 L869.8 294.0" fill="none" stroke="#fff" stroke-width="0.9"/><path d="M875.8 301.6 L888.0 307.6 L894.0 307.6" fill="none" stroke="#fff" stroke-width="0.9"/><path d="M868.2 328.9 L878.9 331.9 L891.0 327.3 L900.1 325.8" fill="none" stroke="#fff" stroke-width="0.9"/><path d="M860.7 336.4 L869.8 341.0 L884.9 338.0 L898.6 338.0" fill="none" stroke="#fff" stroke-width="0.9"/><path d="M860.7 334.9 L860.7 345.5" fill="none" stroke="#fff" stroke-width="0.9"/><path d="M866.7 360.7 L884.9 357.7 L889.5 354.6" fill="none" stroke="#fff" stroke-width="0.9"/><path d="M891.0 356.2 L892.5 371.3 L886.4 377.4 L888.0 392.6 L886.4 401.7" fill="none" stroke="#fff" stroke-width="0.9"/><path d="M886.4 401.7 L906.2 386.5 L930.4 365.3" fill="none" stroke="#fff" stroke-width="0.9"/><path d="M889.0 429.1 L893.7 432.9" fill="none" stroke="#fff" stroke-width="0.9"/><path d="M884.3 491.7 L893.7 503.0" fill="none" stroke="#fff" stroke-width="0.9"/><path d="M986.1 527.3 L1000.3 521.6 L1001.3 516.9 L998.4 513.1" fill="none" stroke="#fff" stroke-width="0.9"/><path d="M932.0 624.1 L934.2 632.7 L937.0 639.8 L931.3 649.7 L922.8 663.9" fill="none" stroke="#fff" stroke-width="0.9"/><path d="M934.2 632.7 L945.5 631.2 L959.8 629.8 L964.0 631.2 L969.7 622.7 L976.8 617.0" fill="none" stroke="#fff" stroke-width="0.9"/><path d="M978.2 671.0 L986.8 671.8 L981.1 678.2 L971.1 698.1 L952.7 718.0" fill="none" stroke="#fff" stroke-width="0.9"/><path d="M1083.8 756.9 L1133.8 754.6" fill="none" stroke="#fff" stroke-width="0.9"/><path d="M1105.1 792.6 L1129.0 791.9 L1136.9 819.8 L1135.6 829.1 L1119.7 837.0" fill="none" stroke="#fff" stroke-width="0.9"/><path d="M1129.0 791.9 L1134.3 785.3 L1139.6 780.0" fill="none" stroke="#fff" stroke-width="0.9"/><path d="M1024.6 854.7 L1079.2 854.7" fill="none" stroke="#fff" stroke-width="0.9"/><path d="M1111.1 720.5 L1120.2 740.9 L1133.8 768.2 L1140.7 779.6" fill="none" stroke="#fff" stroke-width="0.9"/><path d="M1024.6 854.7 L1061.0 854.7" fill="none" stroke="#fff" stroke-width="0.9"/><path d="M1036.0 877.4 L1024.6 866.1" fill="none" stroke="#fff" stroke-width="0.9"/><path d="M931.7 819.6 L939.6 803.7 L952.9 794.4 L968.8 795.7" fill="none" stroke="#fff" stroke-width="0.9"/></svg>
<svg style="left:420px;top:540px" width="980" height="22" viewBox="420 540 980 22"><rect x="427" y="543" width="1" height="1" fill="#999"/><rect x="427" y="546" width="1" height="1" fill="#999"/><rect x="427" y="549" width="1" height="1" fill="#999"/><rect x="427" y="552" width="1" height="1" fill="#999"/><rect x="427" y="555" width="1" height="1" fill="#999"/><rect x="427" y="558" width="1" height="1" fill="#999"/><rect x="1393" y="543" width="1" height="1" fill="#999"/><rect x="1393" y="546" width="1" height="1" fill="#999"/><rect x="1393" y="549" width="1" height="1" fill="#999"/><rect x="1393" y="552" width="1" height="1" fill="#999"/><rect x="1393" y="555" width="1" height="1" fill="#999"/><rect x="1393" y="558" width="1" height="1" fill="#999"/></svg>
<div class="t" style="left:1400px;top:117px;">Layer Styling</div><svg style="left:1840px;top:119px" width="28" height="14" viewBox="1840 119 28 14"><rect x="1841.5" y="120.5" width="10" height="10" rx="2" fill="none" stroke="#666" stroke-width="1"/><rect x="1845" y="122.5" width="4.5" height="4" fill="none" stroke="#666" stroke-width="1"/><rect x="1843.5" y="124.5" width="4.5" height="4" fill="#efefef" stroke="#666" stroke-width="1"/><rect x="1855.5" y="120.5" width="10" height="10" rx="2" fill="none" stroke="#666" stroke-width="1"/><path d="M1858 123 L1863 128 M1863 123 L1858 128" stroke="#555" stroke-width="1.8"/></svg><div class="a" style="left:1399px;top:138px;width:467px;height:25px;background:linear-gradient(#f8f8f8,#e9e9e9);border:1px solid #b4b4b4;border-radius:3px;"></div><div class="t" style="left:1424px;top:142px;">recovery_rate</div><div class="a" style="left:1440px;top:169px;width:426px;height:25px;background:linear-gradient(#f8f8f8,#e9e9e9);border:1px solid #b4b4b4;border-radius:3px;"></div><div class="t" style="left:1465px;top:173px;">Graduated</div><div class="a" style="left:1399px;top:201px;width:38px;height:781px;background:#5e5e5e"></div><div class="t" style="left:1440px;top:204px;">Value</div><div class="t" style="left:1440px;top:234px;">Symbol</div><div class="t" style="left:1440px;top:264px;">Legend format</div><div class="t" style="left:1440px;top:297px;">Color ramp</div><div class="a" style="left:1543px;top:201px;width:293px;height:24px;background:#fff;border:1px solid #b9b9b9;border-radius:2px;"></div><div class="a" style="left:1815px;top:202px;width:1px;height:22px;background:#d0d0d0"></div><div class="t" style="left:1546px;top:206px;font-size:9px;line-height:10px;color:#444">1.2</div><div class="t" style="left:1566px;top:204px;">recovery_rate</div><div class="a" style="left:1842px;top:201px;width:24px;height:24px;background:linear-gradient(#f8f8f8,#e9e9e9);border:1px solid #b4b4b4;border-radius:3px;"></div><div class="a" style="left:1543px;top:232px;width:311px;height:22px;background:linear-gradient(#f8f8f8,#e9e9e9);border:1px solid #b4b4b4;border-radius:3px;"></div><div class="a" style="left:1548px;top:238px;width:300px;height:9px;background:#be63b0"></div><div class="a" style="left:1855px;top:232px;width:11px;height:22px;background:linear-gradient(#f8f8f8,#e9e9e9);border:1px solid #b4b4b4;border-radius:3px;"></div><div class="a" style="left:1543px;top:260px;width:149px;height:25px;background:#fff;border:1px solid #b9b9b9;border-radius:2px;"></div><div class="t" style="left:1547px;top:264px;">%1 - %2</div><div class="a" style="left:1698px;top:260px;width:107px;height:25px;background:#fff;border:1px solid #b9b9b9;border-radius:2px;"></div><div class="a" style="left:1790px;top:261px;width:1px;height:23px;background:#d0d0d0"></div><div class="t" style="left:1703px;top:264px;">Precision 4</div><div class="t" style="left:1830px;top:264px;">Trim</div><div class="a" style="left:1543px;top:292px;width:311px;height:27px;background:linear-gradient(#f8f8f8,#e9e9e9);border:1px solid #b4b4b4;border-radius:3px;"></div><div class="a" style="left:1548px;top:297px;width:300px;height:16px;background:linear-gradient(90deg,#fff,#ff0000)"></div><div class="a" style="left:1855px;top:292px;width:11px;height:27px;background:linear-gradient(#f8f8f8,#e9e9e9);border:1px solid #b4b4b4;border-radius:3px;"></div><div class="a" style="left:1440px;top:352px;width:426px;height:1px;background:#c4c4c4"></div><div class="a" style="left:1513px;top:327px;width:92px;height:26px;background:#dcdcdc;border:1px solid #c0c0c0;border-radius:3px 3px 0 0"></div><div class="a" style="left:1440px;top:325px;width:74px;height:29px;background:#efefef;border:1px solid #c0c0c0;border-bottom:none;border-radius:3px 3px 0 0"></div><div class="t" style="left:1452px;top:331px;">Classes</div><div class="t" style="left:1525px;top:332px;">Histogram</div><div class="a" style="left:1440px;top:363px;width:426px;height:462px;background:#fff;border:1px solid #b0b0b0;border-radius:0px;"></div><div class="a" style="left:1441px;top:364px;width:424px;height:21px;background:linear-gradient(#f8f8f8,#ececec);border-bottom:1px solid #c8c8c8"></div><div class="a" style="left:1522px;top:364px;width:1px;height:20px;background:#c8c8c8"></div><div class="a" style="left:1690px;top:364px;width:1px;height:20px;background:#c8c8c8"></div><div class="t" style="left:1443px;top:366px;">Symbol</div><div class="t" style="left:1525px;top:366px;">Values</div><div class="t" style="left:1694px;top:366px;">Legend</div><div class="a" style="left:1441px;top:421px;width:424px;height:18px;background:#308cc6"></div><div class="t" style="left:1526px;top:385px;">0.000000 - 5.000000</div><div class="t" style="left:1526px;top:403px;">5.000000 - 25.000000</div><div class="t" style="left:1526px;top:421px;color:#fff">25.000000 - 100.000000</div><div class="t" style="left:1694px;top:385px;">0 - 5</div><div class="t" style="left:1694px;top:403px;">5 - 25</div><div class="t" style="left:1694px;top:421px;color:#fff">25 - 100</div><div class="t" style="left:1440px;top:836px;">Mode</div><div class="a" style="left:1482px;top:832px;width:195px;height:24px;background:linear-gradient(#f8f8f8,#e9e9e9);border:1px solid #b4b4b4;border-radius:3px;"></div><div class="t" style="left:1507px;top:835px;">Equal Count (Quantile)</div><div class="t" style="left:1733px;top:836px;">Classes</div><div class="a" style="left:1788px;top:833px;width:78px;height:23px;background:#fff;border:1px solid #b9b9b9;border-radius:2px;"></div><div class="a" style="left:1851px;top:834px;width:1px;height:21px;background:#d0d0d0"></div><div class="t" style="left:1793px;top:836px;">3</div><div class="a" style="left:1440px;top:863px;width:80px;height:25px;background:linear-gradient(#f8f8f8,#e9e9e9);border:1px solid #b4b4b4;border-radius:3px;"></div><div class="t" style="left:1455px;top:867px;">Classify</div><div class="a" style="left:1526px;top:863px;width:28px;height:25px;background:linear-gradient(#f8f8f8,#e9e9e9);border:1px solid #b4b4b4;border-radius:3px;"></div><div class="a" style="left:1560px;top:863px;width:28px;height:25px;background:linear-gradient(#f8f8f8,#e9e9e9);border:1px solid #b4b4b4;border-radius:3px;"></div><div class="a" style="left:1594px;top:863px;width:80px;height:25px;background:linear-gradient(#f8f8f8,#e9e9e9);border:1px solid #b4b4b4;border-radius:3px;"></div><div class="t" style="left:1603px;top:867px;">Delete All</div><div class="a" style="left:1781px;top:863px;width:85px;height:25px;background:linear-gradient(#f8f8f8,#e9e9e9);border:1px solid #b4b4b4;border-radius:3px;"></div><div class="t" style="left:1786px;top:867px;">Advanced</div><div class="t" style="left:1459px;top:897px;">Link class boundaries</div><div class="t" style="left:1462px;top:932px;font-weight:bold;font-size:14px;letter-spacing:0.5px">Layer Rendering</div><div class="a" style="left:1440px;top:957px;width:24px;height:23px;background:linear-gradient(#f8f8f8,#e9e9e9);border:1px solid #b4b4b4;border-radius:3px;"></div><div class="a" style="left:1470px;top:957px;width:24px;height:23px;background:linear-gradient(#f8f8f8,#e9e9e9);border:1px solid #b4b4b4;border-radius:3px;"></div><div class="t" style="left:1697px;top:960px;">Live update</div><div class="a" style="left:1786px;top:956px;width:80px;height:25px;background:linear-gradient(#f8f8f8,#e9e9e9);border:1px solid #b4b4b4;border-radius:3px;"></div><div class="t" style="left:1815px;top:960px;">Apply</div><svg style="left:1395px;top:115px" width="476" height="870" viewBox="1395 115 476 870"><path d="M1405.5 145.5 C1408 144 1411 146 1413 146 C1415 146 1417 144 1419 145.5 C1420 148 1418 149 1419 152 C1417 154 1415 151 1412 152 C1409 153 1407 156 1405 154 C1404 151 1405 149 1405.5 145.5 Z" fill="#e4e4e4" stroke="#999" stroke-width="0.9"/><path d="M1850 148 L1858 148 L1854 153 Z" fill="#444"/><path d="M1850 179 L1858 179 L1854 184 Z" fill="#444"/><rect x="1448" y="173" width="10" height="4" fill="#f2c020"/><rect x="1448" y="178" width="13" height="4" fill="#e04020"/><rect x="1448" y="183" width="13" height="4" fill="#b01010"/><g transform="translate(1405,174)"><path d="M3 15 L8 10 L12 14 L7 19 Z" fill="#d0a050"/><path d="M2 14 L6 11 L8 13 L4 17 Z" fill="#4a7ac0"/><path d="M3 17 L7 13 L9 15 L5 19 Z" fill="#e03030"/><path d="M2 12 L6 9 L8 11 L4 15 Z" fill="#40a040"/><path d="M10 12 L22 5" stroke="#a08040" stroke-width="2.4"/></g><g transform="translate(1403,208)"><path d="M1 8 L5 2 H21 V14 H5 Z" fill="#f3d33a" stroke="#b09000" stroke-width="0.8"/><text x="6" y="11.5" font-size="8" font-weight="bold" fill="#333" font-family="Liberation Sans">abc</text></g><g transform="translate(1403,239)"><rect x="1" y="2" width="20" height="12" rx="6" fill="#fff" stroke="#6a88b8" stroke-width="1.2"/><text x="3.5" y="11.5" font-size="8.5" font-weight="bold" fill="#334" font-family="Liberation Sans">abc</text></g><g transform="translate(1403,269)"><path d="M11 1 L21 6 L11 11 L1 6 Z" fill="#e03030"/><path d="M1 6 L11 11 V21 L1 16 Z" fill="#c8d820"/><path d="M21 6 L11 11 V21 L21 16 Z" fill="#40a030"/></g><g transform="translate(1403,301)"><rect x="7" y="1" width="8" height="7" fill="#e04040"/><path d="M11 8 V12 M4 12 H18 M4 12 V15 M11 12 V15 M18 12 V15" stroke="#c8a020" stroke-width="1.4"/><rect x="1" y="15" width="8" height="6" fill="#f2d020"/><rect x="13" y="15" width="8" height="6" fill="#80b0e0"/></g><g transform="translate(1403,333)"><path d="M4 10 C4 5 10 3 14 6 L16 4 L17 10 L11 10 L13 8 C10 6 7 8 7 11 Z" fill="#40a040"/><path d="M20 13 C20 18 14 20 10 17 L8 19 L7 13 L13 13 L11 15 C14 17 17 15 17 12 Z" fill="#f08030"/></g><path d="M1820 210 L1828 210 L1824 214 Z" fill="#444"/><text x="1849.5" y="217" font-size="21" fill="#6a2a8a" font-family="Liberation Serif">ε</text><path d="M1856 241 L1864 241 L1860 245 Z" fill="#444"/><path d="M1856 304 L1864 304 L1860 308 Z" fill="#444"/><path d="M1793 269 L1801 269 L1797 265 Z M1793 276 L1801 276 L1797 280 Z" fill="#555"/><rect x="1811.5" y="265.5" width="13" height="13" fill="#fff" stroke="#8c8c8c" stroke-width="1"/><path d="M1814 271.5 L1816.5 276 L1822 267.5" fill="none" stroke="#000" stroke-width="1.8"/><path d="M1509 378 L1517 378 L1513 373 Z" fill="#444"/><rect x="1443.5" y="386.5" width="13" height="13" fill="#fff" stroke="#8c8c8c" stroke-width="1"/><path d="M1446 392.5 L1448.5 397 L1454 388.5" fill="none" stroke="#000" stroke-width="1.8"/><rect x="1465" y="386" width="15" height="15" fill="#e6e6e6"/><rect x="1443.5" y="404.5" width="13" height="13" fill="#fff" stroke="#8c8c8c" stroke-width="1"/><path d="M1446 410.5 L1448.5 415 L1454 406.5" fill="none" stroke="#000" stroke-width="1.8"/><rect x="1465" y="404" width="15" height="15" fill="#ace2e2"/><rect x="1443.5" y="422.5" width="13" height="13" fill="#fff" stroke="#8c8c8c" stroke-width="1"/><path d="M1446 428.5 L1448.5 433 L1454 424.5" fill="none" stroke="#000" stroke-width="1.8"/><rect x="1465" y="422" width="15" height="15" fill="#4db3bf"/><rect x="1486" y="421" width="1" height="18" fill="#2a7ab6"/><rect x="1522" y="421" width="1" height="18" fill="#2a7ab6"/><rect x="1690" y="421" width="1" height="18" fill="#2a7ab6"/><rect x="1488" y="837" width="13" height="13" rx="1" fill="#fff" stroke="#d8b020"/><path d="M1491 838v11M1495 838v11M1498 838v11" stroke="#223" stroke-width="1.4" stroke-dasharray="1.5 1.2"/><path d="M1661 842 L1669 842 L1665 846 Z" fill="#555"/><path d="M1854 840 L1862 840 L1858 836 Z M1854 848 L1862 848 L1858 852 Z" fill="#555"/><path d="M1537.5 869.5h5v5h5v5h-5v5h-5v-5h-5v-5h5z" fill="#d8f0d0" stroke="#3a9a3a" stroke-width="1.2"/><rect x="1564" y="872" width="18" height="6" fill="#fff" stroke="#e03030" stroke-width="1.5"/><path d="M1852 873 L1858 873 L1855 876 Z" fill="#666"/><rect x="1440.5" y="899.5" width="13" height="13" fill="#fff" stroke="#8c8c8c" stroke-width="1"/><path d="M1443 905.5 L1445.5 910 L1451 901.5" fill="none" stroke="#000" stroke-width="1.8"/><path d="M1445 935 L1445 947 L1452 941 Z" fill="#222"/><path d="M1447 965 L1452 960 L1452 963 C1457 963 1459 966 1459 969 C1459 973 1456 975 1452 975 L1450 975 L1450 972 L1452 972 C1454 972 1456 971 1456 969 C1456 967 1454 966 1452 966 L1452 969 Z" fill="#f07820"/><path d="M1487 965 L1482 960 L1482 963 C1477 963 1475 966 1475 969 C1475 973 1478 975 1482 975 L1484 975 L1484 972 L1482 972 C1480 972 1478 971 1478 969 C1478 967 1480 966 1482 966 L1482 969 Z" fill="#40a040"/><rect x="1678.5" y="961.5" width="13" height="13" fill="#fff" stroke="#8c8c8c" stroke-width="1"/><path d="M1681 967.5 L1683.5 972 L1689 963.5" fill="none" stroke="#000" stroke-width="1.8"/><path d="M1800 967 L1805 976 L1814 958" fill="none" stroke="#3a9a3a" stroke-width="3"/></svg>
<div class="a" style="left:1869px;top:115px;width:53px;height:870px;background:linear-gradient(90deg,#f4f4f4,#ececec);border-left:1px solid #b9b9b9;border-right:2px solid #d8d8d8"></div>
<svg style="left:1871px;top:115px" width="51" height="870" viewBox="1871 115 51 870"><rect x="1887" y="121" width="1" height="1" fill="#b0b0b0"/><rect x="1887" y="124" width="1" height="1" fill="#b0b0b0"/><rect x="1890" y="121" width="1" height="1" fill="#b0b0b0"/><rect x="1890" y="124" width="1" height="1" fill="#b0b0b0"/><rect x="1893" y="121" width="1" height="1" fill="#b0b0b0"/><rect x="1893" y="124" width="1" height="1" fill="#b0b0b0"/><rect x="1896" y="121" width="1" height="1" fill="#b0b0b0"/><rect x="1896" y="124" width="1" height="1" fill="#b0b0b0"/><rect x="1899" y="121" width="1" height="1" fill="#b0b0b0"/><rect x="1899" y="124" width="1" height="1" fill="#b0b0b0"/><rect x="1902" y="121" width="1" height="1" fill="#b0b0b0"/><rect x="1902" y="124" width="1" height="1" fill="#b0b0b0"/><rect x="1905" y="121" width="1" height="1" fill="#b0b0b0"/><rect x="1905" y="124" width="1" height="1" fill="#b0b0b0"/><g transform="translate(1882,133)"><path d="M1.5 1.5 L1.5 21.5 L21.5 21.5 Z" fill="#e6e2de" stroke="#bcb8b4" stroke-width="0.9"/><path d="M5 11 L5 18 L12 18 Z" fill="#f6f6f6" stroke="#bcb8b4" stroke-width="0.8"/><path d="M16 3 H21.5 V21 L16 16 Z" fill="#efeee2" stroke="#c8c4b0" stroke-width="0.8"/><path d="M18 6h3M19 9h2M18 12h3M19 15h2" stroke="#c8c4b0" stroke-width="0.6"/></g><g transform="translate(1878,164)"><path d="M1 7 C1 2 7 1 11 3 C14 1 20 1 20 6 C20 10 15 11 12 9 C8 11 1 11 1 7 Z" fill="#d9d9d5" stroke="#c4c4c0" stroke-width="0.7"/><rect x="12" y="12" width="10" height="10" rx="1.5" fill="#cfcfcb"/><path d="M14 15.5h4v-2l3 3.5-3 3.5v-2h-4z" fill="#fff"/></g><path d="M1907 174 L1915 174 L1911 178 Z" fill="#d8d8d4"/><g transform="translate(1884,196)"><path d="M1 7 C1 2 7 1 11 3 C14 1 20 1 20 6 C20 10 15 11 12 9 C8 11 1 11 1 7 Z" fill="#d9d9d5" stroke="#c4c4c0" stroke-width="0.7"/><rect x="12" y="12" width="10" height="10" rx="1.5" fill="#cfcfcb"/><path d="M15 19 A3 3 0 1 1 19.5 17" fill="none" stroke="#fff" stroke-width="1.4"/></g><g transform="translate(1884,228)"><circle cx="8" cy="8" r="7" fill="#d9d9d5" stroke="#c4c4c0" stroke-width="0.6"/><path d="M14 10 L20 13.5 V20.5 L14 24 L8 20.5 V13.5 Z" fill="#e4e4e6" stroke="#c8c8cc" stroke-width="0.8"/><path d="M8 8 L15 16" stroke="#b8b8b8" stroke-width="0.9"/></g><g transform="translate(1884,260)"><path d="M1 7 C1 2 7 1 11 3 C14 1 20 1 20 6 C20 10 15 11 12 9 C8 11 1 11 1 7 Z" fill="#d9d9d5" stroke="#c4c4c0" stroke-width="0.7"/><ellipse cx="7.5" cy="6" rx="4" ry="2.5" fill="#eeeeea" stroke="#c4c4c0" stroke-width="0.7"/><rect x="12" y="12" width="10" height="10" rx="1.5" fill="#ccc8b8"/><path d="M17 13.5v7M14 15l6 3.5M14 18.5l6-3.5" stroke="#fff" stroke-width="1.1"/><circle cx="17" cy="17" r="1.6" fill="#ccc8b8" stroke="#fff" stroke-width="0.8"/></g><g transform="translate(1884,292)"><path d="M1 7 C1 2 7 1 11 3 C14 1 20 1 20 6 C20 10 15 11 12 9 C8 11 1 11 1 7 Z" fill="#d9d9d5" stroke="#c4c4c0" stroke-width="0.7"/><path d="M1 21 C1 17 4 13 8 13 C8 17 6 21 1 21 Z" fill="#d9d9d5" stroke="#c4c4c0" stroke-width="0.6"/><rect x="12" y="12" width="10" height="10" rx="1.5" fill="#ccc8b8"/><path d="M17 13.5v7M14 15l6 3.5M14 18.5l6-3.5" stroke="#fff" stroke-width="1.1"/><circle cx="17" cy="17" r="1.6" fill="#ccc8b8" stroke="#fff" stroke-width="0.8"/></g><g transform="translate(1884,324)"><path d="M1 7 C1 2 7 1 11 3 C14 1 20 1 20 6 C20 10 15 11 12 9 C8 11 1 11 1 7 Z" fill="#d9d9d5" stroke="#c4c4c0" stroke-width="0.7"/><ellipse cx="7.5" cy="6" rx="4" ry="2.5" fill="#eeeeea" stroke="#c4c4c0" stroke-width="0.7"/><rect x="12" y="12" width="10" height="10" rx="1.5" fill="#ccc8b8"/><path d="M17 13.5v7M14 15l6 3.5M14 18.5l6-3.5" stroke="#fff" stroke-width="1.1"/><circle cx="17" cy="17" r="1.6" fill="#ccc8b8" stroke="#fff" stroke-width="0.8"/></g><g transform="translate(1884,356)"><path d="M1 7 C1 2 7 1 11 3 C14 1 20 1 20 6 C20 10 15 11 12 9 C8 11 1 11 1 7 Z" fill="#d9d9d5" stroke="#c4c4c0" stroke-width="0.7"/><ellipse cx="7.5" cy="6" rx="4" ry="2.5" fill="#eeeeea" stroke="#c4c4c0" stroke-width="0.7"/><rect x="12.5" y="12.5" width="9" height="9" rx="1.5" fill="#f2eeee" stroke="#e0d8d8"/><path d="M14.5 14.5l5 5M19.5 14.5l-5 5" stroke="#fff" stroke-width="1.8"/><path d="M14.5 14.5l5 5M19.5 14.5l-5 5" stroke="#e4dcdc" stroke-width="0.6"/></g><g transform="translate(1884,388)"><path d="M1 7 C1 2 7 1 11 3 C14 1 20 1 20 6 C20 10 15 11 12 9 C8 11 1 11 1 7 Z" fill="#d9d9d5" stroke="#c4c4c0" stroke-width="0.7"/><path d="M1 21 C1 17 4 13 8 13 C8 17 6 21 1 21 Z" fill="#d9d9d5" stroke="#c4c4c0" stroke-width="0.6"/><rect x="12.5" y="12.5" width="9" height="9" rx="1.5" fill="#f2eeee" stroke="#e0d8d8"/><path d="M14.5 14.5l5 5M19.5 14.5l-5 5" stroke="#fff" stroke-width="1.8"/><path d="M14.5 14.5l5 5M19.5 14.5l-5 5" stroke="#e4dcdc" stroke-width="0.6"/></g><g transform="translate(1884,420)"><path d="M1 8 C1 3 8 2 12 4 C15 2 21 3 21 8 C21 12 16 12 12 12 C11 16 10 22 6 21 C2 20 1 12 1 8 Z" fill="#d9d9d5" stroke="#c4c4c0" stroke-width="0.7"/></g><g transform="translate(1884,452)"><path d="M3 17 C1 12 8 4 14 3 C20 2 22 6 20 9 C18 13 12 19 7 20 C5 20 4 19 3 17 Z" fill="#d9d9d5" stroke="#c4c4c0" stroke-width="0.7"/><path d="M7 15 C8 11 12 8 15 7" fill="none" stroke="#f0f0ee" stroke-width="2.2"/></g><g transform="translate(1884,484)"><path d="M2 2 L9 14 L18 4" fill="none" stroke="#c4c4c0" stroke-width="1.1"/><circle cx="18" cy="4" r="2" fill="#f4f4f4" stroke="#c4c4c0"/><circle cx="9" cy="14" r="1.6" fill="#f4f4f4" stroke="#c4c4c0"/><rect x="12" y="12" width="10" height="10" rx="1.5" fill="#cfcfcb"/><path d="M15 19 A3 3 0 1 1 19.5 17" fill="none" stroke="#fff" stroke-width="1.4"/></g><g transform="translate(1884,516)"><path d="M11 1 V23 M1 12 H23" stroke="#c4c4c0" stroke-width="1"/><rect x="8.5" y="9.5" width="5" height="5" fill="#f4f4f4" stroke="#c4c4c0"/><rect x="1.5" y="15.5" width="6" height="6" fill="#f4f4f4" stroke="#c4c4c0"/><rect x="14" y="2" width="8" height="8" rx="1" fill="#cfcfcb"/></g><g transform="translate(1884,548)"><path d="M2 5 C2 1 9 1 11 4 C13 1 20 1 20 5 C20 9 14 10 11 11 C8 10 2 9 2 5 Z" fill="#d9d9d5" stroke="#c4c4c0" stroke-width="0.7"/><circle cx="7" cy="19" r="2.6" fill="none" stroke="#c4c4c0" stroke-width="1.1"/><circle cx="15" cy="19" r="2.6" fill="none" stroke="#c4c4c0" stroke-width="1.1"/><path d="M8 17 L13 10 M14 17 L9 10" stroke="#c4c4c0" stroke-width="1"/></g><g transform="translate(1884,580)"><path d="M2 5 C2 1 9 1 11 4 C13 1 20 1 20 5 C20 9 14 10 11 11 C8 10 2 9 2 5 Z" fill="#d9d9d5" stroke="#c4c4c0" stroke-width="0.7"/><circle cx="7" cy="19" r="2.6" fill="none" stroke="#c4c4c0" stroke-width="1.1"/><circle cx="15" cy="19" r="2.6" fill="none" stroke="#c4c4c0" stroke-width="1.1"/><path d="M8 17 L13 10 M14 17 L9 10" stroke="#c4c4c0" stroke-width="1"/></g><g transform="translate(1884,612)"><path d="M2 5 C2 1 9 1 11 4 C13 1 20 1 20 5 C20 9 14 10 11 11 C8 10 2 9 2 5 Z" fill="#d9d9d5" stroke="#c4c4c0" stroke-width="0.7"/><path d="M9 3 V9 M13 3 V9 M11 11 C7 15 15 17 9 22" fill="none" stroke="#c4c4c0" stroke-width="1"/></g><g transform="translate(1884,644)"><path d="M3 4h16M3 12h16M3 20h16M11 1v22" stroke="#c4c4c0" stroke-width="0.9"/><rect x="6.5" y="2.5" width="9" height="3" fill="#f4f4f4" stroke="#c4c4c0"/><rect x="6.5" y="10.5" width="9" height="3" fill="#f4f4f4" stroke="#c4c4c0"/><rect x="6.5" y="18.5" width="9" height="3" fill="#f4f4f4" stroke="#c4c4c0"/></g><g transform="translate(1882,676)"><path d="M4 19 C1 11 7 5 13 6" fill="none" stroke="#c4c4c0" stroke-width="1.3"/><path d="M11 2 L16 6 L11 10 Z" fill="#c4c4c0"/><path d="M9 9 L17 14 L9 19 Z" fill="none" stroke="#c4c4c0"/></g><path d="M1909 686 L1917 686 L1913 690 Z" fill="#d8d8d4"/></svg>
<div class="a" style="left:1px;top:984px;width:1921px;height:38px;background:linear-gradient(#f3f3f3,#ececec);border-top:1px solid #d4d4d4;border-bottom:1px solid #c4c4c4"></div>
<svg style="left:0px;top:984px" width="1922" height="37" viewBox="0 984 1922 37"><rect x="7" y="993" width="1" height="1" fill="#b0b0b0"/><rect x="10" y="993" width="1" height="1" fill="#b0b0b0"/><rect x="7" y="996" width="1" height="1" fill="#b0b0b0"/><rect x="10" y="996" width="1" height="1" fill="#b0b0b0"/><rect x="7" y="999" width="1" height="1" fill="#b0b0b0"/><rect x="10" y="999" width="1" height="1" fill="#b0b0b0"/><rect x="7" y="1002" width="1" height="1" fill="#b0b0b0"/><rect x="10" y="1002" width="1" height="1" fill="#b0b0b0"/><rect x="7" y="1005" width="1" height="1" fill="#b0b0b0"/><rect x="10" y="1005" width="1" height="1" fill="#b0b0b0"/><rect x="7" y="1008" width="1" height="1" fill="#b0b0b0"/><rect x="10" y="1008" width="1" height="1" fill="#b0b0b0"/><rect x="7" y="1011" width="1" height="1" fill="#b0b0b0"/><rect x="10" y="1011" width="1" height="1" fill="#b0b0b0"/><rect x="14.5" y="988.5" width="32" height="30" rx="2.5" fill="#dcdcdc" stroke="#b4b4b4"/><g transform="translate(18,991)"><path d="M4 13 C4 20 14 22 18 17 L23 11 L19 7 L14 13 C12 15 10 14 11 12 L16 6 L12 2 L6 8 C4 10 4 11 4 13 Z" fill="#d42020"/><path d="M12 2 L16 6 L14.5 7.5 L10.5 3.5 Z M19 7 L23 11 L21.5 12.5 L17.5 8.5 Z" fill="#fff"/></g><g transform="translate(52,991)"><path d="M4 3 L9 20 L10 10 L21 5 M10 10 L20 10 M9 15 L19 14" stroke="#6ab86a" stroke-width="1.2" fill="none"/><rect x="2" y="1" width="3" height="3" fill="none" stroke="#888" stroke-width="0.8"/><rect x="18" y="3" width="3" height="3" fill="none" stroke="#888" stroke-width="0.8"/><rect x="8" y="19" width="3" height="3" fill="none" stroke="#888" stroke-width="0.8"/></g><path d="M70 1012 L78 1012 L74 1016 Z" fill="#555"/><rect x="80.5" y="988.5" width="31" height="30" rx="2.5" fill="#dcdcdc" stroke="#b4b4b4"/><rect x="88.5" y="996.5" width="3" height="3" fill="none" stroke="#888"/><rect x="101.5" y="997.5" width="3" height="3" fill="none" stroke="#888"/><rect x="94.5" y="1007.5" width="3" height="3" fill="none" stroke="#888"/><path d="M103 1012 L111 1012 L107 1016 Z" fill="#555"/><g transform="translate(331,991)"><path d="M12 12 L5 2 M12 12 L22 8 M12 12 L12 23" stroke="#6ab86a" stroke-width="1.6"/><rect x="10" y="10" width="4" height="4" fill="#fff" stroke="#888"/></g><g transform="translate(364,991)"><path d="M3 8 C3 2 10 1 13 5 C16 9 14 13 15 18 C16 22 10 24 7 20 C4 16 3 12 3 8 Z" fill="#8cc080" stroke="#4a804a"/><path d="M10 4 C14 0 22 2 22 6 C22 10 18 10 16 12 C14 9 12 7 10 4 Z" fill="#aaa" stroke="#666"/></g><path d="M384 1012 L392 1012 L388 1016 Z" fill="#555"/><g transform="translate(396,991)"><path d="M2 2 L22 22 M22 2 L2 22" stroke="#6ab86a" stroke-width="1.8"/><rect x="10" y="10" width="4" height="4" fill="#fff" stroke="#888"/></g><g transform="translate(429,991)"><path d="M2 22 L22 2" stroke="#6ab86a" stroke-width="1.6"/><path d="M6 4 L13 10 L11 12 L20 20 L10 15 L12 13 L3 6 Z" fill="#f2d020" stroke="#c8a000" stroke-width="0.6"/></g><path d="M459 1001 L467 1001 L463 1005 Z" fill="#555"/><g transform="translate(474,991)"><path d="M4 20 L8 10 L18 15" stroke="#6ab86a" stroke-width="1.6" fill="none"/><circle cx="4" cy="20" r="2" fill="#eee" stroke="#888"/><circle cx="8" cy="10" r="2" fill="#eee" stroke="#888"/><circle cx="18" cy="15" r="2" fill="#eee" stroke="#888"/><path d="M10 10 L18 2 L22 6 L14 14 Z" fill="#f2d020" stroke="#555" stroke-width="0.8"/></g><rect x="514" y="993" width="1" height="1" fill="#b0b0b0"/><rect x="517" y="993" width="1" height="1" fill="#b0b0b0"/><rect x="514" y="996" width="1" height="1" fill="#b0b0b0"/><rect x="517" y="996" width="1" height="1" fill="#b0b0b0"/><rect x="514" y="999" width="1" height="1" fill="#b0b0b0"/><rect x="517" y="999" width="1" height="1" fill="#b0b0b0"/><rect x="514" y="1002" width="1" height="1" fill="#b0b0b0"/><rect x="517" y="1002" width="1" height="1" fill="#b0b0b0"/><rect x="514" y="1005" width="1" height="1" fill="#b0b0b0"/><rect x="517" y="1005" width="1" height="1" fill="#b0b0b0"/><rect x="514" y="1008" width="1" height="1" fill="#b0b0b0"/><rect x="517" y="1008" width="1" height="1" fill="#b0b0b0"/><rect x="514" y="1011" width="1" height="1" fill="#b0b0b0"/><rect x="517" y="1011" width="1" height="1" fill="#b0b0b0"/><g transform="translate(524,991)"><path d="M5 4 C5 1 19 1 19 4 V20 C19 23 5 23 5 20 Z" fill="#f2c830" stroke="#c89a10" stroke-width="0.8"/><ellipse cx="12" cy="4" rx="7" ry="2.5" fill="#fbe48a"/></g><g transform="translate(557,991)"><rect x="3" y="1" width="4" height="22" fill="#8a4a20"/><rect x="3" y="19" width="21" height="4" fill="#8a4a20"/><path d="M10 17 L10 6 A10 10 0 0 1 22 17 Z" fill="none" stroke="#e0b020" stroke-width="1.4"/></g><g transform="translate(590,991)"><path d="M4 4 C1 8 1 14 4 18 M20 4 C23 8 23 14 20 18 M7 6 C5 9 5 13 7 16 M17 6 C19 9 19 13 17 16" stroke="#e0b020" stroke-width="1.6" fill="none"/><circle cx="12" cy="11" r="3" fill="#40d040" stroke="#222"/><path d="M12 14 V22 M9 22 H15" stroke="#222" stroke-width="2.2"/></g><g transform="translate(623,991)"><path d="M1 17 L12 11 L23 17 L12 23 Z" fill="#d8e870" stroke="#889040" stroke-width="0.8"/><path d="M12 16 C8 10 7 8 7 6 A5 5 0 0 1 17 6 C17 8 16 10 12 16 Z" fill="#f04020"/><circle cx="12" cy="6" r="1.8" fill="#fff"/></g><rect x="664" y="993" width="1" height="1" fill="#b0b0b0"/><rect x="667" y="993" width="1" height="1" fill="#b0b0b0"/><rect x="664" y="996" width="1" height="1" fill="#b0b0b0"/><rect x="667" y="996" width="1" height="1" fill="#b0b0b0"/><rect x="664" y="999" width="1" height="1" fill="#b0b0b0"/><rect x="667" y="999" width="1" height="1" fill="#b0b0b0"/><rect x="664" y="1002" width="1" height="1" fill="#b0b0b0"/><rect x="667" y="1002" width="1" height="1" fill="#b0b0b0"/><rect x="664" y="1005" width="1" height="1" fill="#b0b0b0"/><rect x="667" y="1005" width="1" height="1" fill="#b0b0b0"/><rect x="664" y="1008" width="1" height="1" fill="#b0b0b0"/><rect x="667" y="1008" width="1" height="1" fill="#b0b0b0"/><rect x="664" y="1011" width="1" height="1" fill="#b0b0b0"/><rect x="667" y="1011" width="1" height="1" fill="#b0b0b0"/><g transform="translate(673,991)"><rect x="1" y="1" width="22" height="22" fill="#4aa04a"/><circle cx="13" cy="10" r="6" fill="none" stroke="#fff" stroke-width="2"/><path d="M9 14 L3 20" stroke="#fff" stroke-width="2.4"/></g><g transform="translate(704,991)"><rect x="1" y="2" width="20" height="21" fill="#f2d040"/><path d="M3 10 C8 14 10 8 14 16 C16 20 18 18 21 22" stroke="#4a7ac0" stroke-width="2" fill="none"/><rect x="3" y="4" width="4" height="5" fill="#e04040"/><path d="M10 16 L24 1" stroke="#8a4a20" stroke-width="2.6"/></g><rect x="744" y="993" width="1" height="1" fill="#b0b0b0"/><rect x="747" y="993" width="1" height="1" fill="#b0b0b0"/><rect x="744" y="996" width="1" height="1" fill="#b0b0b0"/><rect x="747" y="996" width="1" height="1" fill="#b0b0b0"/><rect x="744" y="999" width="1" height="1" fill="#b0b0b0"/><rect x="747" y="999" width="1" height="1" fill="#b0b0b0"/><rect x="744" y="1002" width="1" height="1" fill="#b0b0b0"/><rect x="747" y="1002" width="1" height="1" fill="#b0b0b0"/><rect x="744" y="1005" width="1" height="1" fill="#b0b0b0"/><rect x="747" y="1005" width="1" height="1" fill="#b0b0b0"/><rect x="744" y="1008" width="1" height="1" fill="#b0b0b0"/><rect x="747" y="1008" width="1" height="1" fill="#b0b0b0"/><rect x="744" y="1011" width="1" height="1" fill="#b0b0b0"/><rect x="747" y="1011" width="1" height="1" fill="#b0b0b0"/><rect x="755" y="991" width="24" height="24" fill="#ffc0cc"/><text x="767" y="1008" text-anchor="middle" font-size="10" font-weight="bold" fill="#ee1010" font-family="Liberation Sans">AD</text><rect x="788" y="991" width="24" height="24" fill="#e4ebe2"/><text x="800" y="1008" text-anchor="middle" font-size="10" font-weight="bold" fill="#d0d8cc" font-family="Liberation Sans">MO</text><rect x="820" y="991" width="24" height="24" fill="#b8b0bc"/><text x="832" y="1008" text-anchor="middle" font-size="10" font-weight="bold" fill="#d6d0da" font-family="Liberation Sans">RO</text><rect x="924" y="991" width="24" height="24" fill="#d6d8c8"/><text x="936" y="1008" text-anchor="middle" font-size="10" font-weight="bold" fill="#c6cab2" font-family="Liberation Sans">SC</text><rect x="958" y="991" width="24" height="24" fill="#bfb6ba"/><text x="970" y="1008" text-anchor="middle" font-size="9" font-weight="bold" fill="#e8e0e4" font-family="Liberation Sans">ADJ</text><rect x="991" y="991" width="24" height="24" fill="#d4ddda"/><text x="1003" y="1008" text-anchor="middle" font-size="10" font-weight="bold" fill="#e8c8cc" font-family="Liberation Sans">2P</text><rect x="1024" y="991" width="24" height="24" fill="#f6f6f6"/><text x="1036" y="1008" text-anchor="middle" font-size="10" font-weight="bold" fill="#aaaaaa" font-family="Liberation Sans">T-</text><rect x="1057" y="991" width="24" height="24" fill="#a4a4a4"/><text x="1069" y="1008" text-anchor="middle" font-size="10" font-weight="bold" fill="#f4f4f4" font-family="Liberation Sans">T+</text><rect x="1090" y="991" width="24" height="24" fill="#dde4d0"/><text x="1102" y="1008" text-anchor="middle" font-size="10" font-weight="bold" fill="#e4d0d0" font-family="Liberation Sans">! !</text><rect x="1124" y="991" width="23" height="24" fill="#a8aac0"/><path d="M1128 1003 L1136 995 V1000 C1142 1000 1145 1004 1145 1011 C1143 1007 1140 1006 1136 1006 V1011 Z" fill="#d0d2e2"/><rect x="1161" y="993" width="1" height="1" fill="#b0b0b0"/><rect x="1164" y="993" width="1" height="1" fill="#b0b0b0"/><rect x="1161" y="996" width="1" height="1" fill="#b0b0b0"/><rect x="1164" y="996" width="1" height="1" fill="#b0b0b0"/><rect x="1161" y="999" width="1" height="1" fill="#b0b0b0"/><rect x="1164" y="999" width="1" height="1" fill="#b0b0b0"/><rect x="1161" y="1002" width="1" height="1" fill="#b0b0b0"/><rect x="1164" y="1002" width="1" height="1" fill="#b0b0b0"/><rect x="1161" y="1005" width="1" height="1" fill="#b0b0b0"/><rect x="1164" y="1005" width="1" height="1" fill="#b0b0b0"/><rect x="1161" y="1008" width="1" height="1" fill="#b0b0b0"/><rect x="1164" y="1008" width="1" height="1" fill="#b0b0b0"/><rect x="1161" y="1011" width="1" height="1" fill="#b0b0b0"/><rect x="1164" y="1011" width="1" height="1" fill="#b0b0b0"/><g transform="translate(1172,991)"><path d="M2 6 C2 1 12 1 16 3 C20 5 19 10 16 11 C13 12 11 16 7 15 C3 14 2 10 2 6 Z" fill="#d2d2ce" stroke="#bdbdb8" stroke-width="0.8"/></g><path d="M1202 1002 L1210 1002 L1206 1006 Z" fill="#d8d8d4"/><g transform="translate(1216,991)"><path d="M2 6 C2 1 12 1 16 3 C20 5 19 10 16 11 C13 12 11 16 7 15 C3 14 2 10 2 6 Z" fill="#d2d2ce" stroke="#bdbdb8" stroke-width="0.8"/><rect x="13" y="13" width="9" height="9" rx="1" fill="#d6d6d0"/></g><g transform="translate(1250,991)"><path d="M2 6 C2 1 12 1 16 3 C20 5 19 10 16 11 C13 12 11 16 7 15 C3 14 2 10 2 6 Z" fill="#d2d2ce" stroke="#bdbdb8" stroke-width="0.8"/></g><g transform="translate(1282,991)"><path d="M2 6 C2 1 12 1 16 3 C20 5 19 10 16 11 C13 12 11 16 7 15 C3 14 2 10 2 6 Z" fill="#d2d2ce" stroke="#bdbdb8" stroke-width="0.8"/></g><g transform="translate(1315,991)"><path d="M2 6 C2 1 12 1 16 3 C20 5 19 10 16 11 C13 12 11 16 7 15 C3 14 2 10 2 6 Z" fill="#d2d2ce" stroke="#bdbdb8" stroke-width="0.8"/><rect x="13" y="13" width="9" height="9" rx="1" fill="#d6d6d0"/></g><g transform="translate(1350,991)"><path d="M2 6 C2 1 12 1 16 3 C20 5 19 10 16 11 C13 12 11 16 7 15 C3 14 2 10 2 6 Z" fill="#d2d2ce" stroke="#bdbdb8" stroke-width="0.8"/></g><path d="M1380 1002 L1388 1002 L1384 1006 Z" fill="#d8d8d4"/><g transform="translate(1395,991)"><path d="M2 6 C2 1 12 1 16 3 C20 5 19 10 16 11 C13 12 11 16 7 15 C3 14 2 10 2 6 Z" fill="#d2d2ce" stroke="#bdbdb8" stroke-width="0.8"/></g><path d="M1425 1002 L1433 1002 L1429 1006 Z" fill="#d8d8d4"/><g transform="translate(1440,991)"><path d="M2 6 C2 1 12 1 16 3 C20 5 19 10 16 11 C13 12 11 16 7 15 C3 14 2 10 2 6 Z" fill="#d2d2ce" stroke="#bdbdb8" stroke-width="0.8"/><rect x="13" y="13" width="9" height="9" rx="1" fill="#d6d6d0"/></g><path d="M1470 1002 L1478 1002 L1474 1006 Z" fill="#d8d8d4"/><g transform="translate(1485,991)"><path d="M2 6 C2 1 12 1 16 3 C20 5 19 10 16 11 C13 12 11 16 7 15 C3 14 2 10 2 6 Z" fill="#d2d2ce" stroke="#bdbdb8" stroke-width="0.8"/><rect x="13" y="13" width="9" height="9" rx="1" fill="#d6d6d0"/></g><path d="M1515 1002 L1523 1002 L1519 1006 Z" fill="#d8d8d4"/><g transform="translate(1530,991)"><path d="M2 6 C2 1 12 1 16 3 C20 5 19 10 16 11 C13 12 11 16 7 15 C3 14 2 10 2 6 Z" fill="#d2d2ce" stroke="#bdbdb8" stroke-width="0.8"/><rect x="13" y="13" width="9" height="9" rx="1" fill="#d6d6d0"/></g><path d="M1560 1002 L1568 1002 L1564 1006 Z" fill="#d8d8d4"/><g transform="translate(1574,991)"><path d="M2 6 C2 1 12 1 16 3 C20 5 19 10 16 11 C13 12 11 16 7 15 C3 14 2 10 2 6 Z" fill="#d2d2ce" stroke="#bdbdb8" stroke-width="0.8"/><rect x="13" y="13" width="9" height="9" rx="1" fill="#d6d6d0"/></g><path d="M1604 1002 L1612 1002 L1608 1006 Z" fill="#d8d8d4"/><g transform="translate(1608,991)"><path d="M2 6 C2 1 12 1 16 3 C20 5 19 10 16 11 C13 12 11 16 7 15 C3 14 2 10 2 6 Z" fill="#d2d2ce" stroke="#bdbdb8" stroke-width="0.8"/><rect x="13" y="13" width="9" height="9" rx="1" fill="#d6d6d0"/></g><g transform="translate(1640,991)"><path d="M2 6 C2 1 12 1 16 3 C20 5 19 10 16 11 C13 12 11 16 7 15 C3 14 2 10 2 6 Z" fill="#d2d2ce" stroke="#bdbdb8" stroke-width="0.8"/><rect x="13" y="13" width="9" height="9" rx="1" fill="#d6d6d0"/></g><g transform="translate(1673,991)"><path d="M2 6 C2 1 12 1 16 3 C20 5 19 10 16 11 C13 12 11 16 7 15 C3 14 2 10 2 6 Z" fill="#d2d2ce" stroke="#bdbdb8" stroke-width="0.8"/><rect x="13" y="13" width="9" height="9" rx="1" fill="#d6d6d0"/></g><g transform="translate(1706,991)"><path d="M4 20 L16 2 L22 6 L10 24 Z" fill="#d2d2ce"/></g></svg><div class="a" style="left:114px;top:992px;width:102px;height:23px;background:#fff;border:1px solid #b0b0b0;border-radius:2px;"></div><div class="a" style="left:201px;top:993px;width:1px;height:21px;background:#d0d0d0"></div><div class="t" style="left:118px;top:995px;">2</div><div class="a" style="left:217px;top:991px;width:109px;height:24px;background:linear-gradient(#f8f8f8,#e9e9e9);border:1px solid #b4b4b4;border-radius:3px;"></div><div class="t" style="left:222px;top:995px;">px</div><div class="a" style="left:850px;top:992px;width:69px;height:23px;background:#eeeeee;border:1px solid #bdbdbd;border-radius:2px;"></div><div class="a" style="left:904px;top:993px;width:1px;height:21px;background:#d0d0d0"></div><div class="t" style="left:856px;top:995px;color:#b4b4b4">0.0</div><svg style="left:0px;top:984px" width="1922" height="37" viewBox="0 984 1922 37"><path d="M309 1001 L317 1001 L313 1005 Z" fill="#555"/><path d="M204 999 L211 999 L207.5 995 Z M204 1007 L211 1007 L207.5 1011 Z" fill="#555"/><path d="M908 999 L915 999 L911.5 995 Z M908 1007 L915 1007 L911.5 1011 Z" fill="#bbb"/></svg>
<div class="a" style="left:1px;top:1022px;width:1921px;height:32px;background:#efefef"></div>
<div class="a" style="left:6px;top:1026px;width:269px;height:25px;background:#fff;border:1px solid #bdbdbd;border-radius:3px;"></div><div class="t" style="left:35px;top:1030px;color:#777;font-size:13px;letter-spacing:0.5px">Type to locate (Ctrl+K)</div><div class="t" style="left:1054px;top:1030px;font-size:12.5px;letter-spacing:0.1px">Coordinate</div><div class="a" style="left:1118px;top:1027px;width:89px;height:22px;background:#fff;border:1px solid #b9b9b9;border-radius:2px;"></div><div class="t" style="left:1129px;top:1030px;font-size:12.5px;letter-spacing:0.1px">127.36,8.51</div><div class="t" style="left:1241px;top:1030px;font-size:12.5px;letter-spacing:0.1px">Scale</div><div class="a" style="left:1274px;top:1027px;width:95px;height:22px;background:#fff;border:1px solid #b9b9b9;border-radius:2px;"></div><div class="a" style="left:1350px;top:1028px;width:1px;height:20px;background:#d0d0d0"></div><div class="t" style="left:1278px;top:1030px;font-size:12.5px;letter-spacing:0.1px">1:7165939</div><div class="t" style="left:1404px;top:1030px;font-size:12.5px;letter-spacing:0.1px">Magnifier</div><div class="a" style="left:1460px;top:1027px;width:97px;height:22px;background:#fff;border:1px solid #b9b9b9;border-radius:2px;"></div><div class="a" style="left:1542px;top:1028px;width:1px;height:20px;background:#d0d0d0"></div><div class="t" style="left:1464px;top:1030px;font-size:12.5px;letter-spacing:0.1px">100%</div><div class="t" style="left:1566px;top:1030px;font-size:12.5px;letter-spacing:0.1px">Rotation</div><div class="a" style="left:1622px;top:1027px;width:93px;height:22px;background:#fff;border:1px solid #b9b9b9;border-radius:2px;"></div><div class="a" style="left:1700px;top:1028px;width:1px;height:20px;background:#d0d0d0"></div><div class="t" style="left:1627px;top:1030px;font-size:12.5px;letter-spacing:0.1px">0.0 °</div><div class="t" style="left:1741px;top:1030px;font-size:12.5px;letter-spacing:0.1px">Render</div><div class="t" style="left:1813px;top:1030px;font-size:12.5px;letter-spacing:0.1px">EPSG:4326</div><svg style="left:0px;top:1021px" width="1922" height="34" viewBox="0 1021 1922 34"><circle cx="20" cy="1037" r="5" fill="none" stroke="#555" stroke-width="1.4"/><path d="M24 1041 L28 1045" stroke="#555" stroke-width="1.6"/><g transform="translate(1211,1029)"><path d="M3 8 C3 3 10 1 12 4 C14 7 12 10 13 13 C14 16 9 17 6 14 C3 11 3 10 3 8 Z" fill="#fff" stroke="#333" stroke-width="1.3"/><path d="M5 6 L11 12 M5 10 L10 14" stroke="#333"/><path d="M12 3 L16 1" stroke="#333"/><circle cx="11" cy="13" r="3" fill="none" stroke="#333"/></g><path d="M1354 1036 L1362 1036 L1358 1040 Z" fill="#555"/><rect x="1383" y="1036" width="12" height="9" rx="1" fill="#444"/><path d="M1385.5 1036 V1033 A3.5 3.5 0 0 1 1392.5 1033 V1036" fill="none" stroke="#444" stroke-width="1.6"/><path d="M1545 1035 L1552 1035 L1548.5 1031 Z M1545 1041 L1552 1041 L1548.5 1045 Z" fill="#555"/><path d="M1703 1035 L1710 1035 L1706.5 1031 Z M1703 1041 L1710 1041 L1706.5 1045 Z" fill="#555"/><rect x="1722.5" y="1031.5" width="13" height="13" fill="#fff" stroke="#8c8c8c" stroke-width="1"/><path d="M1725 1037.5 L1727.5 1042 L1733 1033.5" fill="none" stroke="#000" stroke-width="1.8"/><circle cx="1804" cy="1038" r="6.5" fill="none" stroke="#555" stroke-width="1"/><path d="M1797.5 1038 H1810.5 M1804 1031.5 V1044.5 M1799 1034 Q1804 1036 1809 1034 M1799 1042 Q1804 1040 1809 1042" stroke="#555" stroke-width="0.8" fill="none"/><ellipse cx="1906" cy="1038.4" rx="8" ry="6.4" fill="#666"/><path d="M1907 1043 L1913 1046.5 L1910 1042 Z" fill="#666"/><circle cx="1902.3" cy="1038.4" r="1.3" fill="#fff"/><circle cx="1906" cy="1038.4" r="1.3" fill="#fff"/><circle cx="1909.7" cy="1038.4" r="1.3" fill="#fff"/></svg>
<div class="a" style="left:0px;top:1054px;width:1922px;height:1px;background:#222"></div>
<div class="a" style="left:1921px;top:0px;width:1px;height:1055px;background:#222"></div>
<div class="a" style="left:0px;top:0px;width:1922px;height:1px;background:#111"></div></body></html>
